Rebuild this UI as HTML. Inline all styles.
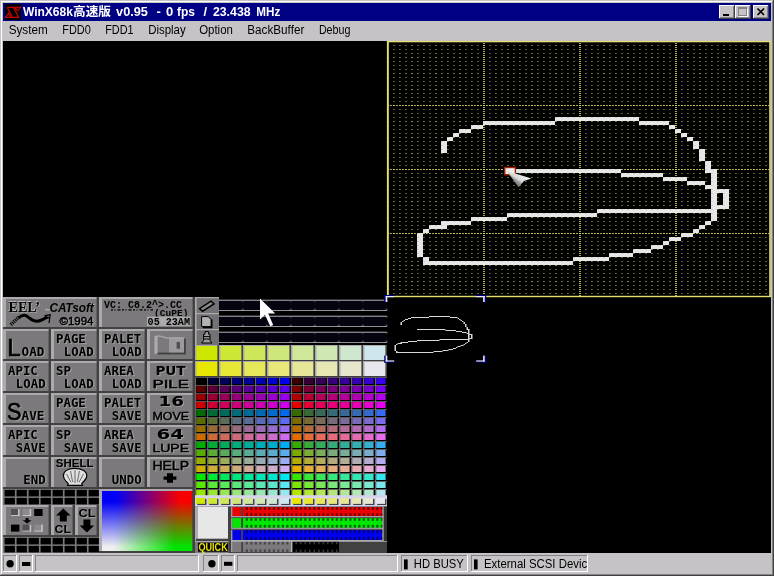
<!DOCTYPE html>
<html><head><meta charset="utf-8"><title>WinX68k</title>
<style>
html,body{margin:0;padding:0;background:#c6c3c6;overflow:hidden}
svg{display:block;will-change:transform}
text{white-space:pre}
.ls{font-family:"Liberation Sans",sans-serif}
.lf{font-family:"Liberation Serif",serif}
.lm{font-family:"Liberation Mono",monospace}
.dm{font-family:"DejaVu Sans Mono","Liberation Mono",monospace}
.ds{font-family:"DejaVu Sans","Liberation Sans",sans-serif}
.cj{font-family:"Liberation Sans","Noto Sans CJK JP",sans-serif}
</style></head>
<body>
<svg width="774" height="576" viewBox="0 0 774 576">
<rect x="0" y="0" width="774" height="576" fill="#c6c3c6"/>
<rect x="1" y="1" width="772" height="1" fill="#ffffff"/>
<rect x="1" y="1" width="1" height="574" fill="#ffffff"/>
<rect x="772" y="1" width="1" height="574" fill="#848284"/>
<rect x="1" y="574" width="772" height="1" fill="#848284"/>
<rect x="773" y="0" width="1" height="576" fill="#424142"/>
<rect x="0" y="575" width="774" height="1" fill="#424142"/>
<rect x="3" y="3" width="768" height="18" fill="#000084"/>
<rect x="5" y="4" width="16" height="16" fill="#000"/>
<g stroke="#c60000" stroke-width="1.2" fill="none" stroke-linejoin="round"><path d="M7.2 7.4H20.6L17.4 10.8L14.9 7.4M7.2 7.4L12.6 17.3M13.4 7.4L18.8 17.3H5.4L8.7 13.1L10.6 17.3"/></g>
<text class="ls" x="22.9" y="16.3" font-size="13" fill="#fff" font-weight="bold" textLength="50" lengthAdjust="spacingAndGlyphs">WinX68k</text>
<text class="cj" x="73" y="16" font-size="12.4" fill="#fff" font-weight="bold" textLength="38" lengthAdjust="spacingAndGlyphs">高速版</text>
<text class="ls" x="116.1" y="16.3" font-size="13" fill="#fff" font-weight="bold" textLength="31.8" lengthAdjust="spacingAndGlyphs">v0.95</text>
<text class="ls" x="158.7" y="16.3" font-size="13" fill="#fff" font-weight="bold" text-anchor="middle">-</text>
<text class="ls" x="169.5" y="16.3" font-size="13" fill="#fff" font-weight="bold" text-anchor="middle">0</text>
<text class="ls" x="176.9" y="16.3" font-size="13" fill="#fff" font-weight="bold" textLength="18" lengthAdjust="spacingAndGlyphs">fps</text>
<text class="ls" x="205.2" y="16.3" font-size="13" fill="#fff" font-weight="bold" text-anchor="middle">/</text>
<text class="ls" x="212.9" y="16.3" font-size="13" fill="#fff" font-weight="bold" textLength="37.7" lengthAdjust="spacingAndGlyphs">23.438</text>
<text class="ls" x="256.3" y="16.3" font-size="13" fill="#fff" font-weight="bold" textLength="24" lengthAdjust="spacingAndGlyphs">MHz</text>
<rect x="719" y="5" width="16" height="14" fill="#c6c3c6"/>
<rect x="719" y="5" width="15" height="1" fill="#ffffff"/>
<rect x="719" y="5" width="1" height="13" fill="#ffffff"/>
<rect x="734" y="5" width="1" height="14" fill="#424142"/>
<rect x="719" y="18" width="16" height="1" fill="#424142"/>
<rect x="733" y="6" width="1" height="12" fill="#848284"/>
<rect x="720" y="17" width="14" height="1" fill="#848284"/>
<rect x="723" y="14" width="6" height="2" fill="#000"/>
<rect x="735" y="5" width="16" height="14" fill="#c6c3c6"/>
<rect x="735" y="5" width="15" height="1" fill="#ffffff"/>
<rect x="735" y="5" width="1" height="13" fill="#ffffff"/>
<rect x="750" y="5" width="1" height="14" fill="#424142"/>
<rect x="735" y="18" width="16" height="1" fill="#424142"/>
<rect x="749" y="6" width="1" height="12" fill="#848284"/>
<rect x="736" y="17" width="14" height="1" fill="#848284"/>
<rect x="738.5" y="7.5" width="8" height="8" fill="none" stroke="#848284" stroke-width="1"/>
<rect x="738" y="7" width="9" height="2" fill="#848284"/>
<rect x="739.5" y="8.5" width="8" height="8" fill="none" stroke="#fff" stroke-width="1" opacity="0"/>
<rect x="739" y="16" width="9" height="1" fill="#ffffff"/>
<rect x="747" y="9" width="1" height="8" fill="#ffffff"/>
<rect x="753" y="5" width="16" height="14" fill="#c6c3c6"/>
<rect x="753" y="5" width="15" height="1" fill="#ffffff"/>
<rect x="753" y="5" width="1" height="13" fill="#ffffff"/>
<rect x="768" y="5" width="1" height="14" fill="#424142"/>
<rect x="753" y="18" width="16" height="1" fill="#424142"/>
<rect x="767" y="6" width="1" height="12" fill="#848284"/>
<rect x="754" y="17" width="14" height="1" fill="#848284"/>
<path d="M757.5 8.5L764 15M764 8.5L757.5 15" stroke="#000" stroke-width="1.7" fill="none"/>
<text class="ls" x="8.7" y="34" font-size="12" fill="#000" textLength="39.1" lengthAdjust="spacingAndGlyphs">System</text>
<text class="ls" x="62.2" y="34" font-size="12" fill="#000" textLength="28.6" lengthAdjust="spacingAndGlyphs">FDD0</text>
<text class="ls" x="105.2" y="34" font-size="12" fill="#000" textLength="28.4" lengthAdjust="spacingAndGlyphs">FDD1</text>
<text class="ls" x="148.2" y="34" font-size="12" fill="#000" textLength="37.5" lengthAdjust="spacingAndGlyphs">Display</text>
<text class="ls" x="199.2" y="34" font-size="12" fill="#000" textLength="33.7" lengthAdjust="spacingAndGlyphs">Option</text>
<text class="ls" x="247.3" y="34" font-size="12" fill="#000" textLength="57" lengthAdjust="spacingAndGlyphs">BackBuffer</text>
<text class="ls" x="318.9" y="34" font-size="12" fill="#000" textLength="31.5" lengthAdjust="spacingAndGlyphs">Debug</text>
<rect x="3" y="41" width="768" height="512" fill="#000"/>
<defs><pattern id="dots" x="387" y="41" width="24" height="16" patternUnits="userSpaceOnUse"><rect x="0.2" y="0" width="1.5" height="1" fill="#c6c363"/><rect x="0.2" y="4" width="1.5" height="1" fill="#94924a"/><rect x="0.2" y="8" width="1.5" height="1" fill="#94924a"/><rect x="0.2" y="12" width="1.5" height="1" fill="#94924a"/><rect x="6.2" y="0" width="1.5" height="1" fill="#94924a"/><rect x="6.2" y="4" width="1.5" height="1" fill="#7b7931"/><rect x="6.2" y="8" width="1.5" height="1" fill="#7b7931"/><rect x="6.2" y="12" width="1.5" height="1" fill="#7b7931"/><rect x="12.2" y="0" width="1.5" height="1" fill="#94924a"/><rect x="12.2" y="4" width="1.5" height="1" fill="#7b7931"/><rect x="12.2" y="8" width="1.5" height="1" fill="#7b7931"/><rect x="12.2" y="12" width="1.5" height="1" fill="#7b7931"/><rect x="18.2" y="0" width="1.5" height="1" fill="#94924a"/><rect x="18.2" y="4" width="1.5" height="1" fill="#7b7931"/><rect x="18.2" y="8" width="1.5" height="1" fill="#7b7931"/><rect x="18.2" y="12" width="1.5" height="1" fill="#7b7931"/></pattern><clipPath id="gclip"><rect x="387" y="41" width="384" height="256"/></clipPath></defs>
<rect x="387" y="41" width="384" height="256" fill="url(#dots)"/>
<line x1="483.95" y1="41" x2="483.95" y2="296" stroke="#e7df6b" stroke-width="1.5" stroke-dasharray="1 1"/>
<line x1="387.2" y1="105.5" x2="769" y2="105.5" stroke="#e7df6b" stroke-width="1" stroke-dasharray="1.5 1.5"/>
<line x1="579.95" y1="41" x2="579.95" y2="296" stroke="#e7df6b" stroke-width="1.5" stroke-dasharray="1 1"/>
<line x1="387.2" y1="169.5" x2="769" y2="169.5" stroke="#e7df6b" stroke-width="1" stroke-dasharray="1.5 1.5"/>
<line x1="675.95" y1="41" x2="675.95" y2="296" stroke="#e7df6b" stroke-width="1.5" stroke-dasharray="1 1"/>
<line x1="387.2" y1="233.5" x2="769" y2="233.5" stroke="#e7df6b" stroke-width="1" stroke-dasharray="1.5 1.5"/>
<rect x="387" y="41" width="383.8" height="1.3" fill="#e7df6b"/>
<rect x="387" y="295.8" width="383.8" height="1.4" fill="#e7df6b"/>
<rect x="386.9" y="41" width="1.9" height="256" fill="#e7df6b"/>
<rect x="769.2" y="41" width="1.7" height="256" fill="#e7df6b"/>
<g fill="#e7e7e7">
<rect x="555" y="117" width="84" height="4"/>
<rect x="483" y="121" width="72" height="4"/>
<rect x="639" y="121" width="30" height="4"/>
<rect x="471" y="125" width="12" height="4"/>
<rect x="669" y="125" width="6" height="4"/>
<rect x="459" y="129" width="12" height="4"/>
<rect x="675" y="129" width="6" height="4"/>
<rect x="453" y="133" width="6" height="4"/>
<rect x="681" y="133" width="6" height="4"/>
<rect x="447" y="137" width="6" height="4"/>
<rect x="687" y="137" width="6" height="4"/>
<rect x="441" y="141" width="6" height="4"/>
<rect x="693" y="141" width="6" height="4"/>
<rect x="441" y="145" width="6" height="4"/>
<rect x="693" y="145" width="6" height="4"/>
<rect x="441" y="149" width="6" height="4"/>
<rect x="699" y="149" width="6" height="4"/>
<rect x="699" y="153" width="6" height="4"/>
<rect x="699" y="157" width="6" height="4"/>
<rect x="705" y="161" width="6" height="4"/>
<rect x="705" y="165" width="6" height="4"/>
<rect x="507" y="169" width="114" height="4"/>
<rect x="705" y="169" width="12" height="4"/>
<rect x="621" y="173" width="42" height="4"/>
<rect x="711" y="173" width="6" height="4"/>
<rect x="663" y="177" width="24" height="4"/>
<rect x="711" y="177" width="6" height="4"/>
<rect x="687" y="181" width="18" height="4"/>
<rect x="711" y="181" width="6" height="4"/>
<rect x="705" y="185" width="12" height="4"/>
<rect x="711" y="189" width="18" height="4"/>
<rect x="711" y="193" width="6" height="4"/>
<rect x="723" y="193" width="6" height="4"/>
<rect x="711" y="197" width="6" height="4"/>
<rect x="723" y="197" width="6" height="4"/>
<rect x="711" y="201" width="6" height="4"/>
<rect x="723" y="201" width="6" height="4"/>
<rect x="711" y="205" width="18" height="4"/>
<rect x="597" y="209" width="120" height="4"/>
<rect x="507" y="213" width="90" height="4"/>
<rect x="711" y="213" width="6" height="4"/>
<rect x="471" y="217" width="36" height="4"/>
<rect x="711" y="217" width="6" height="4"/>
<rect x="441" y="221" width="30" height="4"/>
<rect x="705" y="221" width="6" height="4"/>
<rect x="429" y="225" width="18" height="4"/>
<rect x="699" y="225" width="6" height="4"/>
<rect x="423" y="229" width="6" height="4"/>
<rect x="693" y="229" width="6" height="4"/>
<rect x="417" y="233" width="6" height="4"/>
<rect x="681" y="233" width="12" height="4"/>
<rect x="417" y="237" width="6" height="4"/>
<rect x="669" y="237" width="12" height="4"/>
<rect x="417" y="241" width="6" height="4"/>
<rect x="663" y="241" width="6" height="4"/>
<rect x="417" y="245" width="6" height="4"/>
<rect x="651" y="245" width="12" height="4"/>
<rect x="417" y="249" width="6" height="4"/>
<rect x="633" y="249" width="18" height="4"/>
<rect x="417" y="253" width="6" height="4"/>
<rect x="609" y="253" width="24" height="4"/>
<rect x="423" y="257" width="6" height="4"/>
<rect x="573" y="257" width="36" height="4"/>
<rect x="423" y="261" width="150" height="4"/>
</g>
<g fill="url(#dots)" opacity=".3">
<rect x="555" y="117" width="84" height="4"/>
<rect x="483" y="121" width="72" height="4"/>
<rect x="639" y="121" width="30" height="4"/>
<rect x="471" y="125" width="12" height="4"/>
<rect x="669" y="125" width="6" height="4"/>
<rect x="459" y="129" width="12" height="4"/>
<rect x="675" y="129" width="6" height="4"/>
<rect x="453" y="133" width="6" height="4"/>
<rect x="681" y="133" width="6" height="4"/>
<rect x="447" y="137" width="6" height="4"/>
<rect x="687" y="137" width="6" height="4"/>
<rect x="441" y="141" width="6" height="4"/>
<rect x="693" y="141" width="6" height="4"/>
<rect x="441" y="145" width="6" height="4"/>
<rect x="693" y="145" width="6" height="4"/>
<rect x="441" y="149" width="6" height="4"/>
<rect x="699" y="149" width="6" height="4"/>
<rect x="699" y="153" width="6" height="4"/>
<rect x="699" y="157" width="6" height="4"/>
<rect x="705" y="161" width="6" height="4"/>
<rect x="705" y="165" width="6" height="4"/>
<rect x="507" y="169" width="114" height="4"/>
<rect x="705" y="169" width="12" height="4"/>
<rect x="621" y="173" width="42" height="4"/>
<rect x="711" y="173" width="6" height="4"/>
<rect x="663" y="177" width="24" height="4"/>
<rect x="711" y="177" width="6" height="4"/>
<rect x="687" y="181" width="18" height="4"/>
<rect x="711" y="181" width="6" height="4"/>
<rect x="705" y="185" width="12" height="4"/>
<rect x="711" y="189" width="18" height="4"/>
<rect x="711" y="193" width="6" height="4"/>
<rect x="723" y="193" width="6" height="4"/>
<rect x="711" y="197" width="6" height="4"/>
<rect x="723" y="197" width="6" height="4"/>
<rect x="711" y="201" width="6" height="4"/>
<rect x="723" y="201" width="6" height="4"/>
<rect x="711" y="205" width="18" height="4"/>
<rect x="597" y="209" width="120" height="4"/>
<rect x="507" y="213" width="90" height="4"/>
<rect x="711" y="213" width="6" height="4"/>
<rect x="471" y="217" width="36" height="4"/>
<rect x="711" y="217" width="6" height="4"/>
<rect x="441" y="221" width="30" height="4"/>
<rect x="705" y="221" width="6" height="4"/>
<rect x="429" y="225" width="18" height="4"/>
<rect x="699" y="225" width="6" height="4"/>
<rect x="423" y="229" width="6" height="4"/>
<rect x="693" y="229" width="6" height="4"/>
<rect x="417" y="233" width="6" height="4"/>
<rect x="681" y="233" width="12" height="4"/>
<rect x="417" y="237" width="6" height="4"/>
<rect x="669" y="237" width="12" height="4"/>
<rect x="417" y="241" width="6" height="4"/>
<rect x="663" y="241" width="6" height="4"/>
<rect x="417" y="245" width="6" height="4"/>
<rect x="651" y="245" width="12" height="4"/>
<rect x="417" y="249" width="6" height="4"/>
<rect x="633" y="249" width="18" height="4"/>
<rect x="417" y="253" width="6" height="4"/>
<rect x="609" y="253" width="24" height="4"/>
<rect x="423" y="257" width="6" height="4"/>
<rect x="573" y="257" width="36" height="4"/>
<rect x="423" y="261" width="150" height="4"/>
</g>
<g fill="#d6d7d6">
<rect x="429" y="316" width="21" height="1"/>
<rect x="411" y="317" width="18" height="1"/>
<rect x="450" y="317" width="7.5" height="1"/>
<rect x="408" y="318" width="3" height="1"/>
<rect x="457.5" y="318" width="1.5" height="1"/>
<rect x="405" y="319" width="3" height="1"/>
<rect x="459" y="319" width="1.5" height="1"/>
<rect x="403.5" y="320" width="1.5" height="1"/>
<rect x="460.5" y="320" width="1.5" height="1"/>
<rect x="402" y="321" width="1.5" height="1"/>
<rect x="462" y="321" width="1.5" height="1"/>
<rect x="400.5" y="322" width="1.5" height="1"/>
<rect x="463.5" y="322" width="1.5" height="1"/>
<rect x="400.5" y="323" width="1.5" height="1"/>
<rect x="463.5" y="323" width="1.5" height="1"/>
<rect x="400.5" y="324" width="1.5" height="1"/>
<rect x="465" y="324" width="1.5" height="1"/>
<rect x="465" y="325" width="1.5" height="1"/>
<rect x="465" y="326" width="1.5" height="1"/>
<rect x="466.5" y="327" width="1.5" height="1"/>
<rect x="466.5" y="328" width="1.5" height="1"/>
<rect x="417" y="329" width="28.5" height="1"/>
<rect x="466.5" y="329" width="3" height="1"/>
<rect x="445.5" y="330" width="10.5" height="1"/>
<rect x="468" y="330" width="1.5" height="1"/>
<rect x="456" y="331" width="6" height="1"/>
<rect x="468" y="331" width="1.5" height="1"/>
<rect x="462" y="332" width="4.5" height="1"/>
<rect x="468" y="332" width="1.5" height="1"/>
<rect x="466.5" y="333" width="3" height="1"/>
<rect x="468" y="334" width="4.5" height="1"/>
<rect x="468" y="335" width="1.5" height="1"/>
<rect x="471" y="335" width="1.5" height="1"/>
<rect x="468" y="336" width="1.5" height="1"/>
<rect x="471" y="336" width="1.5" height="1"/>
<rect x="468" y="337" width="1.5" height="1"/>
<rect x="471" y="337" width="1.5" height="1"/>
<rect x="468" y="338" width="4.5" height="1"/>
<rect x="439.5" y="339" width="30" height="1"/>
<rect x="417" y="340" width="22.5" height="1"/>
<rect x="468" y="340" width="1.5" height="1"/>
<rect x="408" y="341" width="9" height="1"/>
<rect x="468" y="341" width="1.5" height="1"/>
<rect x="400.5" y="342" width="7.5" height="1"/>
<rect x="466.5" y="342" width="1.5" height="1"/>
<rect x="397.5" y="343" width="4.5" height="1"/>
<rect x="465" y="343" width="1.5" height="1"/>
<rect x="396" y="344" width="1.5" height="1"/>
<rect x="463.5" y="344" width="1.5" height="1"/>
<rect x="394.5" y="345" width="1.5" height="1"/>
<rect x="460.5" y="345" width="3" height="1"/>
<rect x="394.5" y="346" width="1.5" height="1"/>
<rect x="457.5" y="346" width="3" height="1"/>
<rect x="394.5" y="347" width="1.5" height="1"/>
<rect x="456" y="347" width="1.5" height="1"/>
<rect x="394.5" y="348" width="1.5" height="1"/>
<rect x="453" y="348" width="3" height="1"/>
<rect x="394.5" y="349" width="1.5" height="1"/>
<rect x="448.5" y="349" width="4.5" height="1"/>
<rect x="394.5" y="350" width="1.5" height="1"/>
<rect x="442.5" y="350" width="6" height="1"/>
<rect x="396" y="351" width="1.5" height="1"/>
<rect x="433.5" y="351" width="9" height="1"/>
<rect x="396" y="352" width="37.5" height="1"/>
</g>
<rect x="504.8" y="167.5" width="10.6" height="7.2" fill="#efefef" stroke="#a52000" stroke-width="1.4"/>
<defs><linearGradient id="ag" gradientUnits="userSpaceOnUse" x1="522" y1="174" x2="514" y2="186"><stop offset="0" stop-color="#efefef"/><stop offset=".45" stop-color="#d6d7d6"/><stop offset=".6" stop-color="#9c9a9c"/><stop offset="1" stop-color="#636163"/></linearGradient></defs>
<path d="M506.6 170.8L531.4 178.4L524 181L518.6 187.2Z" fill="url(#ag)"/>
<rect x="3" y="297" width="384" height="256" fill="#7b797b"/>
<rect x="3" y="297" width="96" height="32" fill="#7b797b"/>
<rect x="3" y="297" width="96" height="2" fill="#adaaad"/>
<rect x="3" y="297" width="3" height="32" fill="#adaaad"/>
<rect x="3" y="327" width="96" height="2" fill="#424142"/>
<rect x="96.6" y="297" width="2.4" height="32" fill="#424142"/>
<path d="M3 329l3 -2v2z" fill="#424142"/>
<rect x="99" y="297" width="96" height="32" fill="#7b797b"/>
<rect x="99" y="297" width="96" height="2" fill="#adaaad"/>
<rect x="99" y="297" width="3" height="32" fill="#adaaad"/>
<rect x="99" y="327" width="96" height="2" fill="#424142"/>
<rect x="192.6" y="297" width="2.4" height="32" fill="#424142"/>
<path d="M99 329l3 -2v2z" fill="#424142"/>
<rect x="3" y="329" width="48" height="32" fill="#7b797b"/>
<rect x="3" y="329" width="48" height="2" fill="#adaaad"/>
<rect x="3" y="329" width="3" height="32" fill="#adaaad"/>
<rect x="3" y="359" width="48" height="2" fill="#424142"/>
<rect x="48.6" y="329" width="2.4" height="32" fill="#424142"/>
<path d="M3 361l3 -2v2z" fill="#424142"/>
<rect x="51" y="329" width="48" height="32" fill="#7b797b"/>
<rect x="51" y="329" width="48" height="2" fill="#adaaad"/>
<rect x="51" y="329" width="3" height="32" fill="#adaaad"/>
<rect x="51" y="359" width="48" height="2" fill="#424142"/>
<rect x="96.6" y="329" width="2.4" height="32" fill="#424142"/>
<path d="M51 361l3 -2v2z" fill="#424142"/>
<rect x="99" y="329" width="48" height="32" fill="#7b797b"/>
<rect x="99" y="329" width="48" height="2" fill="#adaaad"/>
<rect x="99" y="329" width="3" height="32" fill="#adaaad"/>
<rect x="99" y="359" width="48" height="2" fill="#424142"/>
<rect x="144.6" y="329" width="2.4" height="32" fill="#424142"/>
<path d="M99 361l3 -2v2z" fill="#424142"/>
<rect x="147" y="329" width="48" height="32" fill="#7b797b"/>
<rect x="147" y="329" width="48" height="2" fill="#adaaad"/>
<rect x="147" y="329" width="3" height="32" fill="#adaaad"/>
<rect x="147" y="359" width="48" height="2" fill="#424142"/>
<rect x="192.6" y="329" width="2.4" height="32" fill="#424142"/>
<path d="M147 361l3 -2v2z" fill="#424142"/>
<rect x="3" y="361" width="48" height="32" fill="#7b797b"/>
<rect x="3" y="361" width="48" height="2" fill="#adaaad"/>
<rect x="3" y="361" width="3" height="32" fill="#adaaad"/>
<rect x="3" y="391" width="48" height="2" fill="#424142"/>
<rect x="48.6" y="361" width="2.4" height="32" fill="#424142"/>
<path d="M3 393l3 -2v2z" fill="#424142"/>
<rect x="51" y="361" width="48" height="32" fill="#7b797b"/>
<rect x="51" y="361" width="48" height="2" fill="#adaaad"/>
<rect x="51" y="361" width="3" height="32" fill="#adaaad"/>
<rect x="51" y="391" width="48" height="2" fill="#424142"/>
<rect x="96.6" y="361" width="2.4" height="32" fill="#424142"/>
<path d="M51 393l3 -2v2z" fill="#424142"/>
<rect x="99" y="361" width="48" height="32" fill="#7b797b"/>
<rect x="99" y="361" width="48" height="2" fill="#adaaad"/>
<rect x="99" y="361" width="3" height="32" fill="#adaaad"/>
<rect x="99" y="391" width="48" height="2" fill="#424142"/>
<rect x="144.6" y="361" width="2.4" height="32" fill="#424142"/>
<path d="M99 393l3 -2v2z" fill="#424142"/>
<rect x="147" y="361" width="48" height="32" fill="#7b797b"/>
<rect x="147" y="361" width="48" height="2" fill="#adaaad"/>
<rect x="147" y="361" width="3" height="32" fill="#adaaad"/>
<rect x="147" y="391" width="48" height="2" fill="#424142"/>
<rect x="192.6" y="361" width="2.4" height="32" fill="#424142"/>
<path d="M147 393l3 -2v2z" fill="#424142"/>
<rect x="3" y="393" width="48" height="32" fill="#7b797b"/>
<rect x="3" y="393" width="48" height="2" fill="#adaaad"/>
<rect x="3" y="393" width="3" height="32" fill="#adaaad"/>
<rect x="3" y="423" width="48" height="2" fill="#424142"/>
<rect x="48.6" y="393" width="2.4" height="32" fill="#424142"/>
<path d="M3 425l3 -2v2z" fill="#424142"/>
<rect x="51" y="393" width="48" height="32" fill="#7b797b"/>
<rect x="51" y="393" width="48" height="2" fill="#adaaad"/>
<rect x="51" y="393" width="3" height="32" fill="#adaaad"/>
<rect x="51" y="423" width="48" height="2" fill="#424142"/>
<rect x="96.6" y="393" width="2.4" height="32" fill="#424142"/>
<path d="M51 425l3 -2v2z" fill="#424142"/>
<rect x="99" y="393" width="48" height="32" fill="#7b797b"/>
<rect x="99" y="393" width="48" height="2" fill="#adaaad"/>
<rect x="99" y="393" width="3" height="32" fill="#adaaad"/>
<rect x="99" y="423" width="48" height="2" fill="#424142"/>
<rect x="144.6" y="393" width="2.4" height="32" fill="#424142"/>
<path d="M99 425l3 -2v2z" fill="#424142"/>
<rect x="147" y="393" width="48" height="32" fill="#7b797b"/>
<rect x="147" y="393" width="48" height="2" fill="#adaaad"/>
<rect x="147" y="393" width="3" height="32" fill="#adaaad"/>
<rect x="147" y="423" width="48" height="2" fill="#424142"/>
<rect x="192.6" y="393" width="2.4" height="32" fill="#424142"/>
<path d="M147 425l3 -2v2z" fill="#424142"/>
<rect x="3" y="425" width="48" height="32" fill="#7b797b"/>
<rect x="3" y="425" width="48" height="2" fill="#adaaad"/>
<rect x="3" y="425" width="3" height="32" fill="#adaaad"/>
<rect x="3" y="455" width="48" height="2" fill="#424142"/>
<rect x="48.6" y="425" width="2.4" height="32" fill="#424142"/>
<path d="M3 457l3 -2v2z" fill="#424142"/>
<rect x="51" y="425" width="48" height="32" fill="#7b797b"/>
<rect x="51" y="425" width="48" height="2" fill="#adaaad"/>
<rect x="51" y="425" width="3" height="32" fill="#adaaad"/>
<rect x="51" y="455" width="48" height="2" fill="#424142"/>
<rect x="96.6" y="425" width="2.4" height="32" fill="#424142"/>
<path d="M51 457l3 -2v2z" fill="#424142"/>
<rect x="99" y="425" width="48" height="32" fill="#7b797b"/>
<rect x="99" y="425" width="48" height="2" fill="#adaaad"/>
<rect x="99" y="425" width="3" height="32" fill="#adaaad"/>
<rect x="99" y="455" width="48" height="2" fill="#424142"/>
<rect x="144.6" y="425" width="2.4" height="32" fill="#424142"/>
<path d="M99 457l3 -2v2z" fill="#424142"/>
<rect x="147" y="425" width="48" height="32" fill="#7b797b"/>
<rect x="147" y="425" width="48" height="2" fill="#adaaad"/>
<rect x="147" y="425" width="3" height="32" fill="#adaaad"/>
<rect x="147" y="455" width="48" height="2" fill="#424142"/>
<rect x="192.6" y="425" width="2.4" height="32" fill="#424142"/>
<path d="M147 457l3 -2v2z" fill="#424142"/>
<rect x="3" y="457" width="48" height="32" fill="#7b797b"/>
<rect x="3" y="457" width="48" height="2" fill="#adaaad"/>
<rect x="3" y="457" width="3" height="32" fill="#adaaad"/>
<rect x="3" y="487" width="48" height="2" fill="#424142"/>
<rect x="48.6" y="457" width="2.4" height="32" fill="#424142"/>
<path d="M3 489l3 -2v2z" fill="#424142"/>
<rect x="51" y="457" width="48" height="32" fill="#7b797b"/>
<rect x="51" y="457" width="48" height="2" fill="#adaaad"/>
<rect x="51" y="457" width="3" height="32" fill="#adaaad"/>
<rect x="51" y="487" width="48" height="2" fill="#424142"/>
<rect x="96.6" y="457" width="2.4" height="32" fill="#424142"/>
<path d="M51 489l3 -2v2z" fill="#424142"/>
<rect x="99" y="457" width="48" height="32" fill="#7b797b"/>
<rect x="99" y="457" width="48" height="2" fill="#adaaad"/>
<rect x="99" y="457" width="3" height="32" fill="#adaaad"/>
<rect x="99" y="487" width="48" height="2" fill="#424142"/>
<rect x="144.6" y="457" width="2.4" height="32" fill="#424142"/>
<path d="M99 489l3 -2v2z" fill="#424142"/>
<rect x="147" y="457" width="48" height="32" fill="#7b797b"/>
<rect x="147" y="457" width="48" height="2" fill="#adaaad"/>
<rect x="147" y="457" width="3" height="32" fill="#adaaad"/>
<rect x="147" y="487" width="48" height="2" fill="#424142"/>
<rect x="192.6" y="457" width="2.4" height="32" fill="#424142"/>
<path d="M147 489l3 -2v2z" fill="#424142"/>
<rect x="3" y="505" width="48" height="32" fill="#7b797b"/>
<rect x="3" y="505" width="48" height="2" fill="#adaaad"/>
<rect x="3" y="505" width="3" height="32" fill="#adaaad"/>
<rect x="3" y="535" width="48" height="2" fill="#424142"/>
<rect x="48.6" y="505" width="2.4" height="32" fill="#424142"/>
<path d="M3 537l3 -2v2z" fill="#424142"/>
<rect x="51" y="505" width="24" height="32" fill="#7b797b"/>
<rect x="51" y="505" width="24" height="2" fill="#adaaad"/>
<rect x="51" y="505" width="3" height="32" fill="#adaaad"/>
<rect x="51" y="535" width="24" height="2" fill="#424142"/>
<rect x="72.6" y="505" width="2.4" height="32" fill="#424142"/>
<path d="M51 537l3 -2v2z" fill="#424142"/>
<rect x="75" y="505" width="24" height="32" fill="#7b797b"/>
<rect x="75" y="505" width="24" height="2" fill="#adaaad"/>
<rect x="75" y="505" width="3" height="32" fill="#adaaad"/>
<rect x="75" y="535" width="24" height="2" fill="#424142"/>
<rect x="96.6" y="505" width="2.4" height="32" fill="#424142"/>
<path d="M75 537l3 -2v2z" fill="#424142"/>
<text class="dm" x="57.3" y="343.5" font-size="11.52" fill="#9c9a9c" font-weight="bold" textLength="29.8" lengthAdjust="spacingAndGlyphs">PAGE</text>
<text class="dm" x="56" y="342.6" font-size="11.52" fill="#000" font-weight="bold" textLength="29.8" lengthAdjust="spacingAndGlyphs">PAGE</text>
<text class="dm" x="65.1" y="356.4" font-size="11.66" fill="#9c9a9c" font-weight="bold" textLength="29.8" lengthAdjust="spacingAndGlyphs">LOAD</text>
<text class="dm" x="63.8" y="355.5" font-size="11.66" fill="#000" font-weight="bold" textLength="29.8" lengthAdjust="spacingAndGlyphs">LOAD</text>
<text class="dm" x="105.3" y="343.5" font-size="11.52" fill="#9c9a9c" font-weight="bold" textLength="37.25" lengthAdjust="spacingAndGlyphs">PALET</text>
<text class="dm" x="104" y="342.6" font-size="11.52" fill="#000" font-weight="bold" textLength="37.25" lengthAdjust="spacingAndGlyphs">PALET</text>
<text class="dm" x="113.1" y="356.4" font-size="11.66" fill="#9c9a9c" font-weight="bold" textLength="29.8" lengthAdjust="spacingAndGlyphs">LOAD</text>
<text class="dm" x="111.8" y="355.5" font-size="11.66" fill="#000" font-weight="bold" textLength="29.8" lengthAdjust="spacingAndGlyphs">LOAD</text>
<text class="dm" x="9.3" y="375.5" font-size="11.52" fill="#9c9a9c" font-weight="bold" textLength="29.8" lengthAdjust="spacingAndGlyphs">APIC</text>
<text class="dm" x="8" y="374.6" font-size="11.52" fill="#000" font-weight="bold" textLength="29.8" lengthAdjust="spacingAndGlyphs">APIC</text>
<text class="dm" x="17.1" y="388.4" font-size="11.66" fill="#9c9a9c" font-weight="bold" textLength="29.8" lengthAdjust="spacingAndGlyphs">LOAD</text>
<text class="dm" x="15.8" y="387.5" font-size="11.66" fill="#000" font-weight="bold" textLength="29.8" lengthAdjust="spacingAndGlyphs">LOAD</text>
<text class="dm" x="57.3" y="375.5" font-size="11.52" fill="#9c9a9c" font-weight="bold" textLength="14.9" lengthAdjust="spacingAndGlyphs">SP</text>
<text class="dm" x="56" y="374.6" font-size="11.52" fill="#000" font-weight="bold" textLength="14.9" lengthAdjust="spacingAndGlyphs">SP</text>
<text class="dm" x="65.1" y="388.4" font-size="11.66" fill="#9c9a9c" font-weight="bold" textLength="29.8" lengthAdjust="spacingAndGlyphs">LOAD</text>
<text class="dm" x="63.8" y="387.5" font-size="11.66" fill="#000" font-weight="bold" textLength="29.8" lengthAdjust="spacingAndGlyphs">LOAD</text>
<text class="dm" x="105.3" y="375.5" font-size="11.52" fill="#9c9a9c" font-weight="bold" textLength="29.8" lengthAdjust="spacingAndGlyphs">AREA</text>
<text class="dm" x="104" y="374.6" font-size="11.52" fill="#000" font-weight="bold" textLength="29.8" lengthAdjust="spacingAndGlyphs">AREA</text>
<text class="dm" x="113.1" y="388.4" font-size="11.66" fill="#9c9a9c" font-weight="bold" textLength="29.8" lengthAdjust="spacingAndGlyphs">LOAD</text>
<text class="dm" x="111.8" y="387.5" font-size="11.66" fill="#000" font-weight="bold" textLength="29.8" lengthAdjust="spacingAndGlyphs">LOAD</text>
<text class="dm" x="57.3" y="407.5" font-size="11.52" fill="#9c9a9c" font-weight="bold" textLength="29.8" lengthAdjust="spacingAndGlyphs">PAGE</text>
<text class="dm" x="56" y="406.6" font-size="11.52" fill="#000" font-weight="bold" textLength="29.8" lengthAdjust="spacingAndGlyphs">PAGE</text>
<text class="dm" x="65.1" y="420.4" font-size="11.66" fill="#9c9a9c" font-weight="bold" textLength="29.8" lengthAdjust="spacingAndGlyphs">SAVE</text>
<text class="dm" x="63.8" y="419.5" font-size="11.66" fill="#000" font-weight="bold" textLength="29.8" lengthAdjust="spacingAndGlyphs">SAVE</text>
<text class="dm" x="105.3" y="407.5" font-size="11.52" fill="#9c9a9c" font-weight="bold" textLength="37.25" lengthAdjust="spacingAndGlyphs">PALET</text>
<text class="dm" x="104" y="406.6" font-size="11.52" fill="#000" font-weight="bold" textLength="37.25" lengthAdjust="spacingAndGlyphs">PALET</text>
<text class="dm" x="113.1" y="420.4" font-size="11.66" fill="#9c9a9c" font-weight="bold" textLength="29.8" lengthAdjust="spacingAndGlyphs">SAVE</text>
<text class="dm" x="111.8" y="419.5" font-size="11.66" fill="#000" font-weight="bold" textLength="29.8" lengthAdjust="spacingAndGlyphs">SAVE</text>
<text class="dm" x="9.3" y="439.5" font-size="11.52" fill="#9c9a9c" font-weight="bold" textLength="29.8" lengthAdjust="spacingAndGlyphs">APIC</text>
<text class="dm" x="8" y="438.6" font-size="11.52" fill="#000" font-weight="bold" textLength="29.8" lengthAdjust="spacingAndGlyphs">APIC</text>
<text class="dm" x="17.1" y="452.4" font-size="11.66" fill="#9c9a9c" font-weight="bold" textLength="29.8" lengthAdjust="spacingAndGlyphs">SAVE</text>
<text class="dm" x="15.8" y="451.5" font-size="11.66" fill="#000" font-weight="bold" textLength="29.8" lengthAdjust="spacingAndGlyphs">SAVE</text>
<text class="dm" x="57.3" y="439.5" font-size="11.52" fill="#9c9a9c" font-weight="bold" textLength="14.9" lengthAdjust="spacingAndGlyphs">SP</text>
<text class="dm" x="56" y="438.6" font-size="11.52" fill="#000" font-weight="bold" textLength="14.9" lengthAdjust="spacingAndGlyphs">SP</text>
<text class="dm" x="65.1" y="452.4" font-size="11.66" fill="#9c9a9c" font-weight="bold" textLength="29.8" lengthAdjust="spacingAndGlyphs">SAVE</text>
<text class="dm" x="63.8" y="451.5" font-size="11.66" fill="#000" font-weight="bold" textLength="29.8" lengthAdjust="spacingAndGlyphs">SAVE</text>
<text class="dm" x="105.3" y="439.5" font-size="11.52" fill="#9c9a9c" font-weight="bold" textLength="29.8" lengthAdjust="spacingAndGlyphs">AREA</text>
<text class="dm" x="104" y="438.6" font-size="11.52" fill="#000" font-weight="bold" textLength="29.8" lengthAdjust="spacingAndGlyphs">AREA</text>
<text class="dm" x="113.1" y="452.4" font-size="11.66" fill="#9c9a9c" font-weight="bold" textLength="29.8" lengthAdjust="spacingAndGlyphs">SAVE</text>
<text class="dm" x="111.8" y="451.5" font-size="11.66" fill="#000" font-weight="bold" textLength="29.8" lengthAdjust="spacingAndGlyphs">SAVE</text>
<text class="dm" x="24.55" y="484.4" font-size="11.66" fill="#9c9a9c" font-weight="bold" textLength="22.35" lengthAdjust="spacingAndGlyphs">END</text>
<text class="dm" x="23.25" y="483.5" font-size="11.66" fill="#000" font-weight="bold" textLength="22.35" lengthAdjust="spacingAndGlyphs">END</text>
<text class="dm" x="113.1" y="484.4" font-size="11.66" fill="#9c9a9c" font-weight="bold" textLength="29.8" lengthAdjust="spacingAndGlyphs">UNDO</text>
<text class="dm" x="111.8" y="483.5" font-size="11.66" fill="#000" font-weight="bold" textLength="29.8" lengthAdjust="spacingAndGlyphs">UNDO</text>
<text class="ls" x="8.5" y="356.9" font-size="24.02" fill="#9c9a9c" textLength="13.4" lengthAdjust="spacingAndGlyphs" stroke="#9c9a9c" stroke-width=".7">L</text>
<text class="ls" x="7.2" y="356" font-size="24.02" fill="#000" textLength="13.4" lengthAdjust="spacingAndGlyphs" stroke="#000" stroke-width=".7">L</text>
<text class="dm" x="22.9" y="356.6" font-size="11.93" fill="#9c9a9c" font-weight="bold" textLength="22.8" lengthAdjust="spacingAndGlyphs">OAD</text>
<text class="dm" x="21.6" y="355.7" font-size="11.93" fill="#000" font-weight="bold" textLength="22.8" lengthAdjust="spacingAndGlyphs">OAD</text>
<text class="ls" x="8.3" y="420.5" font-size="23.18" fill="#9c9a9c" textLength="14.4" lengthAdjust="spacingAndGlyphs" stroke="#9c9a9c" stroke-width=".7">S</text>
<text class="ls" x="7" y="419.6" font-size="23.18" fill="#000" textLength="14.4" lengthAdjust="spacingAndGlyphs" stroke="#000" stroke-width=".7">S</text>
<text class="dm" x="22.9" y="420.6" font-size="11.93" fill="#9c9a9c" font-weight="bold" textLength="22.8" lengthAdjust="spacingAndGlyphs">AVE</text>
<text class="dm" x="21.6" y="419.7" font-size="11.93" fill="#000" font-weight="bold" textLength="22.8" lengthAdjust="spacingAndGlyphs">AVE</text>
<text class="ds" x="156.7" y="376.1" font-size="12.21" fill="#9c9a9c" font-weight="bold" textLength="30.2" lengthAdjust="spacingAndGlyphs">PUT</text>
<text class="ds" x="155.4" y="375.2" font-size="12.21" fill="#000" font-weight="bold" textLength="30.2" lengthAdjust="spacingAndGlyphs">PUT</text>
<text class="ls" x="153.7" y="388.9" font-size="11.17" fill="#9c9a9c" textLength="36.6" lengthAdjust="spacingAndGlyphs" stroke="#9c9a9c" stroke-width=".45">PILE</text>
<text class="ls" x="152.4" y="388" font-size="11.17" fill="#000" textLength="36.6" lengthAdjust="spacingAndGlyphs" stroke="#000" stroke-width=".45">PILE</text>
<text class="ds" x="159.9" y="406.9" font-size="13.17" fill="#9c9a9c" font-weight="bold" textLength="25.4" lengthAdjust="spacingAndGlyphs">16</text>
<text class="ds" x="158.6" y="406" font-size="13.17" fill="#000" font-weight="bold" textLength="25.4" lengthAdjust="spacingAndGlyphs">16</text>
<text class="ls" x="153.7" y="420.9" font-size="11.17" fill="#9c9a9c" textLength="36.6" lengthAdjust="spacingAndGlyphs" stroke="#9c9a9c" stroke-width=".45">MOVE</text>
<text class="ls" x="152.4" y="420" font-size="11.17" fill="#000" textLength="36.6" lengthAdjust="spacingAndGlyphs" stroke="#000" stroke-width=".45">MOVE</text>
<text class="ds" x="157.9" y="439.5" font-size="13.17" fill="#9c9a9c" font-weight="bold" textLength="27.4" lengthAdjust="spacingAndGlyphs">64</text>
<text class="ds" x="156.6" y="438.6" font-size="13.17" fill="#000" font-weight="bold" textLength="27.4" lengthAdjust="spacingAndGlyphs">64</text>
<text class="ls" x="153.7" y="452.9" font-size="11.17" fill="#9c9a9c" textLength="36.6" lengthAdjust="spacingAndGlyphs" stroke="#9c9a9c" stroke-width=".45">LUPE</text>
<text class="ls" x="152.4" y="452" font-size="11.17" fill="#000" textLength="36.6" lengthAdjust="spacingAndGlyphs" stroke="#000" stroke-width=".45">LUPE</text>
<text class="ls" x="153.7" y="470.6" font-size="12.15" fill="#9c9a9c" textLength="36.6" lengthAdjust="spacingAndGlyphs" stroke="#9c9a9c" stroke-width=".45">HELP</text>
<text class="ls" x="152.4" y="469.7" font-size="12.15" fill="#000" textLength="36.6" lengthAdjust="spacingAndGlyphs" stroke="#000" stroke-width=".45">HELP</text>
<path d="M167 473.3h6v3.2h3.4v3.2h-3.4v3.1h-6v-3.1h-3.4v-3.2h3.4z" fill="#000"/>
<text class="ls" x="57.1" y="468.1" font-size="10.06" fill="#9c9a9c" font-weight="bold" textLength="37.6" lengthAdjust="spacingAndGlyphs">SHELL</text>
<text class="ls" x="55.8" y="467.2" font-size="10.06" fill="#000" font-weight="bold" textLength="37.6" lengthAdjust="spacingAndGlyphs">SHELL</text>
<g><path d="M63.4 476c0-5 5-7.6 11.4-7.6s12 2.6 12 7.6c0 3.6-3.6 5.6-5 7.6l.6 1.8h-14.8l.6-1.8c-1.4-2-4.8-4-4.8-7.600z" fill="#dedfde" stroke="#000" stroke-width="1.2"/><path d="M75 470v13M70.600 471l2 11M79.400 471l-2 11M66.600 474l4.400 8.400M83.400 474l-4.400 8.400" stroke="#6b696b" stroke-width="1" fill="none"/></g>
<g><path d="M156 336l10 1.600l18.600 .4v15.800h-28.600z" fill="#7b797b"/><rect x="169" y="338" width="15" height="15.400" fill="#9c9a9c"/><rect x="154.400" y="335.800" width="3.200" height="18" fill="#adaaad"/><path d="M156 335.600h4l6.400 1.600h18v1.200h-18.400l-6-1.600h-4z" fill="#adaaad"/><rect x="176.600" y="342" width="3.400" height="6.800" fill="#525052"/><rect x="157.600" y="352.600" width="28" height="1.800" fill="#424142"/><rect x="184" y="338.600" width="1.800" height="15.600" fill="#424142"/></g>
<text class="lf" x="7.9" y="311.1" font-size="15.27" fill="#bdbabd" font-weight="bold" textLength="31.4" lengthAdjust="spacingAndGlyphs">EEL’</text>
<text class="lf" x="9.9" y="312.5" font-size="15.27" fill="#9c9a9c" font-weight="bold" textLength="31.4" lengthAdjust="spacingAndGlyphs">EEL’</text>
<text class="lf" x="8.6" y="311.6" font-size="15.27" fill="#000" font-weight="bold" textLength="31.4" lengthAdjust="spacingAndGlyphs">EEL’</text>
<path d="M45 309.800h7M88.600 304.400h6" stroke="#bdbabd" stroke-width="1" fill="none"/>
<text class="ls" x="49.4" y="311.6" font-size="13.4" fill="#000" font-weight="bold" textLength="44.4" lengthAdjust="spacingAndGlyphs" font-style="italic">CATsoft</text>
<text class="ls" x="60.9" y="326.1" font-size="11.45" fill="#9c9a9c" textLength="33.8" lengthAdjust="spacingAndGlyphs" stroke="#9c9a9c" stroke-width=".45">©1994</text>
<text class="ls" x="59.6" y="325.2" font-size="11.45" fill="#000" textLength="33.8" lengthAdjust="spacingAndGlyphs" stroke="#000" stroke-width=".45">©1994</text>
<path d="M18.600 317.800c3-2.600 6-3.200 8.400-1.600c3 2 5 5 10 5c4 0 7-2 10.400-4.400" stroke="#000" stroke-width="3" fill="none"/><path d="M10.800 324.600l8-7.400" stroke="#000" stroke-width="3.600" stroke-dasharray="1.100 .9" fill="none"/><path d="M44.600 315.600l5.600-.8l-1.200 8.400M43 319l7-1.600" stroke="#000" stroke-width="1.200" fill="none"/>
<text class="lm" x="104" y="308" font-size="10" fill="#000" font-weight="bold" textLength="78" lengthAdjust="spacingAndGlyphs">VC: C8.2^>.CC</text>
<text class="lm" x="154" y="315.8" font-size="9.5" fill="#000" font-weight="bold" textLength="34.5" lengthAdjust="spacingAndGlyphs">(CuPE)</text>
<path d="M111 309.800H153" stroke="#000" stroke-width="1.200" stroke-dasharray="2 1.500 1 2 3 1.500" fill="none"/>
<rect x="147" y="316.6" width="43.6" height="9.6" fill="#adaaad"/>
<text class="lm" x="148.9" y="325.9" font-size="10" fill="#9c9a9c" font-weight="bold" textLength="42.4" lengthAdjust="spacingAndGlyphs">05 23AM</text>
<text class="lm" x="147.6" y="325" font-size="10" fill="#000" font-weight="bold" textLength="42.4" lengthAdjust="spacingAndGlyphs">05 23AM</text>
<rect x="3" y="489" width="192" height="16" fill="#7b797b"/>
<rect x="4.6" y="489.9" width="10.3" height="6.5" fill="#000"/>
<rect x="16.6" y="489.9" width="10.3" height="6.5" fill="#000"/>
<rect x="28.6" y="489.9" width="10.3" height="6.5" fill="#000"/>
<rect x="40.6" y="489.9" width="10.3" height="6.5" fill="#000"/>
<rect x="52.6" y="489.9" width="10.3" height="6.5" fill="#000"/>
<rect x="64.6" y="489.9" width="10.3" height="6.5" fill="#000"/>
<rect x="76.6" y="489.9" width="10.3" height="6.5" fill="#000"/>
<rect x="88.6" y="489.9" width="10.3" height="6.5" fill="#000"/>
<rect x="100.6" y="489.9" width="10.3" height="6.5" fill="#000"/>
<rect x="112.6" y="489.9" width="10.3" height="6.5" fill="#000"/>
<rect x="124.6" y="489.9" width="10.3" height="6.5" fill="#000"/>
<rect x="136.6" y="489.9" width="10.3" height="6.5" fill="#000"/>
<rect x="148.6" y="489.9" width="10.3" height="6.5" fill="#000"/>
<rect x="160.6" y="489.9" width="10.3" height="6.5" fill="#000"/>
<rect x="172.6" y="489.9" width="10.3" height="6.5" fill="#000"/>
<rect x="184.6" y="489.9" width="10.3" height="6.5" fill="#000"/>
<rect x="4.6" y="497.9" width="10.3" height="6.5" fill="#000"/>
<rect x="16.6" y="497.9" width="10.3" height="6.5" fill="#000"/>
<rect x="28.6" y="497.9" width="10.3" height="6.5" fill="#000"/>
<rect x="40.6" y="497.9" width="10.3" height="6.5" fill="#000"/>
<rect x="52.6" y="497.9" width="10.3" height="6.5" fill="#000"/>
<rect x="64.6" y="497.9" width="10.3" height="6.5" fill="#000"/>
<rect x="76.6" y="497.9" width="10.3" height="6.5" fill="#000"/>
<rect x="88.6" y="497.9" width="10.3" height="6.5" fill="#000"/>
<rect x="100.6" y="497.9" width="10.3" height="6.5" fill="#000"/>
<rect x="112.6" y="497.9" width="10.3" height="6.5" fill="#000"/>
<rect x="124.6" y="497.9" width="10.3" height="6.5" fill="#000"/>
<rect x="136.6" y="497.9" width="10.3" height="6.5" fill="#000"/>
<rect x="148.6" y="497.9" width="10.3" height="6.5" fill="#000"/>
<rect x="160.6" y="497.9" width="10.3" height="6.5" fill="#000"/>
<rect x="172.6" y="497.9" width="10.3" height="6.5" fill="#000"/>
<rect x="184.6" y="497.9" width="10.3" height="6.5" fill="#000"/>
<rect x="3" y="537" width="192" height="16" fill="#7b797b"/>
<rect x="4.6" y="537.9" width="10.3" height="6.5" fill="#000"/>
<rect x="16.6" y="537.9" width="10.3" height="6.5" fill="#000"/>
<rect x="28.6" y="537.9" width="10.3" height="6.5" fill="#000"/>
<rect x="40.6" y="537.9" width="10.3" height="6.5" fill="#000"/>
<rect x="52.6" y="537.9" width="10.3" height="6.5" fill="#000"/>
<rect x="64.6" y="537.9" width="10.3" height="6.5" fill="#000"/>
<rect x="76.6" y="537.9" width="10.3" height="6.5" fill="#000"/>
<rect x="88.6" y="537.9" width="10.3" height="6.5" fill="#000"/>
<rect x="100.6" y="537.9" width="10.3" height="6.5" fill="#000"/>
<rect x="112.6" y="537.9" width="10.3" height="6.5" fill="#000"/>
<rect x="124.6" y="537.9" width="10.3" height="6.5" fill="#000"/>
<rect x="136.6" y="537.9" width="10.3" height="6.5" fill="#000"/>
<rect x="148.6" y="537.9" width="10.3" height="6.5" fill="#000"/>
<rect x="160.6" y="537.9" width="10.3" height="6.5" fill="#000"/>
<rect x="172.6" y="537.9" width="10.3" height="6.5" fill="#000"/>
<rect x="184.6" y="537.9" width="10.3" height="6.5" fill="#000"/>
<rect x="4.6" y="545.9" width="10.3" height="6.5" fill="#000"/>
<rect x="16.6" y="545.9" width="10.3" height="6.5" fill="#000"/>
<rect x="28.6" y="545.9" width="10.3" height="6.5" fill="#000"/>
<rect x="40.6" y="545.9" width="10.3" height="6.5" fill="#000"/>
<rect x="52.6" y="545.9" width="10.3" height="6.5" fill="#000"/>
<rect x="64.6" y="545.9" width="10.3" height="6.5" fill="#000"/>
<rect x="76.6" y="545.9" width="10.3" height="6.5" fill="#000"/>
<rect x="88.6" y="545.9" width="10.3" height="6.5" fill="#000"/>
<rect x="100.6" y="545.9" width="10.3" height="6.5" fill="#000"/>
<rect x="112.6" y="545.9" width="10.3" height="6.5" fill="#000"/>
<rect x="124.6" y="545.9" width="10.3" height="6.5" fill="#000"/>
<rect x="136.6" y="545.9" width="10.3" height="6.5" fill="#000"/>
<rect x="148.6" y="545.9" width="10.3" height="6.5" fill="#000"/>
<rect x="160.6" y="545.9" width="10.3" height="6.5" fill="#000"/>
<rect x="172.6" y="545.9" width="10.3" height="6.5" fill="#000"/>
<rect x="184.6" y="545.9" width="10.3" height="6.5" fill="#000"/>
<rect x="11" y="509" width="8.4" height="7" fill="#525052"/>
<rect x="18" y="509" width="1.6" height="7" fill="#c6c3c6"/>
<rect x="11" y="515" width="8.6" height="1" fill="#c6c3c6"/>
<rect x="22.6" y="509" width="8.4" height="7" fill="#8c8a8c"/>
<rect x="29.6" y="509" width="1.6" height="7" fill="#c6c3c6"/>
<rect x="22.6" y="515" width="8.6" height="1" fill="#c6c3c6"/>
<rect x="34.2" y="509" width="8.4" height="7" fill="#000"/>
<rect x="11" y="524.6" width="8.4" height="7" fill="#000"/>
<rect x="22.6" y="524.6" width="8.4" height="7" fill="#525052"/>
<rect x="29.6" y="524.6" width="1.6" height="7" fill="#c6c3c6"/>
<rect x="22.6" y="530.6" width="8.6" height="1" fill="#c6c3c6"/>
<rect x="34.2" y="524.6" width="8.4" height="7" fill="#8c8a8c"/>
<rect x="41.2" y="524.6" width="1.6" height="7" fill="#c6c3c6"/>
<rect x="34.2" y="530.6" width="8.6" height="1" fill="#c6c3c6"/>
<path d="M25.600 518h3v2.200h3l-4.500 3.400l-4.500-3.400h3z" fill="#000"/>
<path d="M63.300 508.400l7.300 7h-3.800v6h-7v-6h-3.800z" fill="#000"/>
<text class="ls" x="55.9" y="533.9" font-size="10.89" fill="#9c9a9c" font-weight="bold" textLength="16.4" lengthAdjust="spacingAndGlyphs">CL</text>
<text class="ls" x="54.6" y="533" font-size="10.89" fill="#000" font-weight="bold" textLength="16.4" lengthAdjust="spacingAndGlyphs">CL</text>
<text class="ls" x="79.7" y="517.5" font-size="10.89" fill="#9c9a9c" font-weight="bold" textLength="17.2" lengthAdjust="spacingAndGlyphs">CL</text>
<text class="ls" x="78.4" y="516.6" font-size="10.89" fill="#000" font-weight="bold" textLength="17.2" lengthAdjust="spacingAndGlyphs">CL</text>
<path d="M86.900 532.400l7.300-7h-3.800v-6h-7v6h-3.800z" fill="#000"/>
<defs><linearGradient id="gt" gradientUnits="userSpaceOnUse" x1="102" x2="192.4" y1="0" y2="0"><stop offset="0" stop-color="#0000f7"/><stop offset=".15" stop-color="#0000f7"/><stop offset=".86" stop-color="#f70000"/><stop offset="1" stop-color="#f70000"/></linearGradient><linearGradient id="gb" gradientUnits="userSpaceOnUse" x1="102" x2="192.4" y1="0" y2="0"><stop offset="0" stop-color="#efefef"/><stop offset=".13" stop-color="#efefef"/><stop offset=".8" stop-color="#00e300"/><stop offset="1" stop-color="#00e300"/></linearGradient><linearGradient id="gm" gradientUnits="userSpaceOnUse" x1="0" x2="0" y1="491" y2="551"><stop offset="0" stop-color="#000"/><stop offset=".18" stop-color="#000"/><stop offset=".93" stop-color="#fff"/><stop offset="1" stop-color="#fff"/></linearGradient><mask id="mk" maskUnits="userSpaceOnUse" x="100" y="490" width="96" height="64"><rect x="100" y="490" width="96" height="64" fill="url(#gm)"/></mask></defs>
<rect x="99" y="489" width="96" height="64" fill="#7b797b"/>
<rect x="99" y="489" width="96" height="2" fill="#adaaad"/>
<rect x="99" y="489" width="3" height="64" fill="#adaaad"/>
<rect x="102" y="491" width="92" height="61" fill="url(#gt)"/>
<rect x="102" y="491" width="92" height="61" fill="url(#gb)" mask="url(#mk)"/>
<rect x="192.4" y="489" width="2.6" height="64" fill="#424142"/>
<rect x="99" y="551" width="96" height="2" fill="#424142"/>
<rect x="195" y="297" width="24" height="16" fill="#737173"/>
<rect x="195" y="297" width="24" height="1.2" fill="#adaaad"/>
<rect x="195" y="297" width="1.6" height="16" fill="#adaaad"/>
<rect x="219" y="297" width="168" height="16" fill="#000"/>
<rect x="219" y="300.5" width="168" height="9.6" fill="#040410"/>
<rect x="219" y="299.7" width="168" height="1.1" fill="#a5a2a5"/>
<rect x="219" y="310" width="168" height="1" fill="#949294"/>
<rect x="241.8" y="300.4" width="2" height="1" fill="#6b696b"/>
<rect x="241.8" y="308.8" width="2" height="1" fill="#6b696b"/>
<rect x="265.8" y="300.4" width="2" height="1" fill="#6b696b"/>
<rect x="265.8" y="308.8" width="2" height="1" fill="#6b696b"/>
<rect x="289.8" y="300.4" width="2" height="1" fill="#6b696b"/>
<rect x="289.8" y="308.8" width="2" height="1" fill="#6b696b"/>
<rect x="313.8" y="300.4" width="2" height="1" fill="#6b696b"/>
<rect x="313.8" y="308.8" width="2" height="1" fill="#6b696b"/>
<rect x="337.8" y="300.4" width="2" height="1" fill="#6b696b"/>
<rect x="337.8" y="308.8" width="2" height="1" fill="#6b696b"/>
<rect x="361.8" y="300.4" width="2" height="1" fill="#6b696b"/>
<rect x="361.8" y="308.8" width="2" height="1" fill="#6b696b"/>
<rect x="385.8" y="300.4" width="2" height="1" fill="#6b696b"/>
<rect x="385.8" y="308.8" width="2" height="1" fill="#6b696b"/>
<rect x="195" y="313" width="24" height="16" fill="#737173"/>
<rect x="195" y="313" width="24" height="1.2" fill="#adaaad"/>
<rect x="195" y="313" width="1.6" height="16" fill="#adaaad"/>
<rect x="219" y="313" width="168" height="16" fill="#000"/>
<rect x="219" y="316.5" width="168" height="9.6" fill="#040410"/>
<rect x="219" y="315.7" width="168" height="1.1" fill="#a5a2a5"/>
<rect x="219" y="326" width="168" height="1" fill="#949294"/>
<rect x="241.8" y="316.4" width="2" height="1" fill="#6b696b"/>
<rect x="241.8" y="324.8" width="2" height="1" fill="#6b696b"/>
<rect x="265.8" y="316.4" width="2" height="1" fill="#6b696b"/>
<rect x="265.8" y="324.8" width="2" height="1" fill="#6b696b"/>
<rect x="289.8" y="316.4" width="2" height="1" fill="#6b696b"/>
<rect x="289.8" y="324.8" width="2" height="1" fill="#6b696b"/>
<rect x="313.8" y="316.4" width="2" height="1" fill="#6b696b"/>
<rect x="313.8" y="324.8" width="2" height="1" fill="#6b696b"/>
<rect x="337.8" y="316.4" width="2" height="1" fill="#6b696b"/>
<rect x="337.8" y="324.8" width="2" height="1" fill="#6b696b"/>
<rect x="361.8" y="316.4" width="2" height="1" fill="#6b696b"/>
<rect x="361.8" y="324.8" width="2" height="1" fill="#6b696b"/>
<rect x="385.8" y="316.4" width="2" height="1" fill="#6b696b"/>
<rect x="385.8" y="324.8" width="2" height="1" fill="#6b696b"/>
<rect x="195" y="329" width="24" height="16" fill="#737173"/>
<rect x="195" y="329" width="24" height="1.2" fill="#adaaad"/>
<rect x="195" y="329" width="1.6" height="16" fill="#adaaad"/>
<rect x="219" y="329" width="168" height="16" fill="#000"/>
<rect x="219" y="332.5" width="168" height="9.6" fill="#040410"/>
<rect x="219" y="331.7" width="168" height="1.1" fill="#a5a2a5"/>
<rect x="219" y="342" width="168" height="1" fill="#949294"/>
<rect x="241.8" y="332.4" width="2" height="1" fill="#6b696b"/>
<rect x="241.8" y="340.8" width="2" height="1" fill="#6b696b"/>
<rect x="265.8" y="332.4" width="2" height="1" fill="#6b696b"/>
<rect x="265.8" y="340.8" width="2" height="1" fill="#6b696b"/>
<rect x="289.8" y="332.4" width="2" height="1" fill="#6b696b"/>
<rect x="289.8" y="340.8" width="2" height="1" fill="#6b696b"/>
<rect x="313.8" y="332.4" width="2" height="1" fill="#6b696b"/>
<rect x="313.8" y="340.8" width="2" height="1" fill="#6b696b"/>
<rect x="337.8" y="332.4" width="2" height="1" fill="#6b696b"/>
<rect x="337.8" y="340.8" width="2" height="1" fill="#6b696b"/>
<rect x="361.8" y="332.4" width="2" height="1" fill="#6b696b"/>
<rect x="361.8" y="340.8" width="2" height="1" fill="#6b696b"/>
<rect x="385.8" y="332.4" width="2" height="1" fill="#6b696b"/>
<rect x="385.8" y="340.8" width="2" height="1" fill="#6b696b"/>
<path d="M199.600 308.600l11.400-7.400l3 2.600l-11.400 7.400z" fill="#8c8a8c" stroke="#000" stroke-width="1.5"/>
<path d="M201.600 316.600h6.500l3 2.500v7.500h-9.500z" fill="#b5b2b5" stroke="#000" stroke-width="1"/><path d="M211.800 319.500v8h-9" stroke="#000" stroke-width="1.400" fill="none"/>
<path d="M205 331.600h3.600v2.600h1.400v6.200l2 2.600h-10.400l2-2.600v-6.200h1.400z" fill="#9c9a9c" stroke="#000" stroke-width="1"/><path d="M203.600 336.600h6.400M203.600 339h6.400" stroke="#000" stroke-width="1"/>
<rect x="195" y="345" width="24" height="16" fill="#cee700"/>
<rect x="195" y="345" width="24" height="1" fill="#adaaad"/>
<rect x="195" y="345" width="1.5" height="16" fill="#adaaad"/>
<rect x="217.4" y="345" width="1.6" height="16" fill="#424142"/>
<rect x="195" y="360" width="24" height="1" fill="#424142"/>
<rect x="219" y="345" width="24" height="16" fill="#cee736"/>
<rect x="219" y="345" width="24" height="1" fill="#adaaad"/>
<rect x="219" y="345" width="1.5" height="16" fill="#adaaad"/>
<rect x="241.4" y="345" width="1.6" height="16" fill="#424142"/>
<rect x="219" y="360" width="24" height="1" fill="#424142"/>
<rect x="243" y="345" width="24" height="16" fill="#cee75a"/>
<rect x="243" y="345" width="24" height="1" fill="#adaaad"/>
<rect x="243" y="345" width="1.5" height="16" fill="#adaaad"/>
<rect x="265.4" y="345" width="1.6" height="16" fill="#424142"/>
<rect x="243" y="360" width="24" height="1" fill="#424142"/>
<rect x="267" y="345" width="24" height="16" fill="#cee77a"/>
<rect x="267" y="345" width="24" height="1" fill="#adaaad"/>
<rect x="267" y="345" width="1.5" height="16" fill="#adaaad"/>
<rect x="289.4" y="345" width="1.6" height="16" fill="#424142"/>
<rect x="267" y="360" width="24" height="1" fill="#424142"/>
<rect x="291" y="345" width="24" height="16" fill="#cee798"/>
<rect x="291" y="345" width="24" height="1" fill="#adaaad"/>
<rect x="291" y="345" width="1.5" height="16" fill="#adaaad"/>
<rect x="313.4" y="345" width="1.6" height="16" fill="#424142"/>
<rect x="291" y="360" width="24" height="1" fill="#424142"/>
<rect x="315" y="345" width="24" height="16" fill="#cee7b3"/>
<rect x="315" y="345" width="24" height="1" fill="#adaaad"/>
<rect x="315" y="345" width="1.5" height="16" fill="#adaaad"/>
<rect x="337.4" y="345" width="1.6" height="16" fill="#424142"/>
<rect x="315" y="360" width="24" height="1" fill="#424142"/>
<rect x="339" y="345" width="24" height="16" fill="#cee7ce"/>
<rect x="339" y="345" width="24" height="1" fill="#adaaad"/>
<rect x="339" y="345" width="1.5" height="16" fill="#adaaad"/>
<rect x="361.4" y="345" width="1.6" height="16" fill="#424142"/>
<rect x="339" y="360" width="24" height="1" fill="#424142"/>
<rect x="363" y="345" width="24" height="16" fill="#cee7ef"/>
<rect x="363" y="345" width="24" height="1" fill="#adaaad"/>
<rect x="363" y="345" width="1.5" height="16" fill="#adaaad"/>
<rect x="385.4" y="345" width="1.6" height="16" fill="#424142"/>
<rect x="363" y="360" width="24" height="1" fill="#424142"/>
<rect x="195" y="361" width="24" height="16" fill="#e7e700"/>
<rect x="195" y="361" width="24" height="1" fill="#adaaad"/>
<rect x="195" y="361" width="1.5" height="16" fill="#adaaad"/>
<rect x="217.4" y="361" width="1.6" height="16" fill="#424142"/>
<rect x="195" y="376" width="24" height="1" fill="#424142"/>
<rect x="219" y="361" width="24" height="16" fill="#e7e736"/>
<rect x="219" y="361" width="24" height="1" fill="#adaaad"/>
<rect x="219" y="361" width="1.5" height="16" fill="#adaaad"/>
<rect x="241.4" y="361" width="1.6" height="16" fill="#424142"/>
<rect x="219" y="376" width="24" height="1" fill="#424142"/>
<rect x="243" y="361" width="24" height="16" fill="#e7e75a"/>
<rect x="243" y="361" width="24" height="1" fill="#adaaad"/>
<rect x="243" y="361" width="1.5" height="16" fill="#adaaad"/>
<rect x="265.4" y="361" width="1.6" height="16" fill="#424142"/>
<rect x="243" y="376" width="24" height="1" fill="#424142"/>
<rect x="267" y="361" width="24" height="16" fill="#e7e77a"/>
<rect x="267" y="361" width="24" height="1" fill="#adaaad"/>
<rect x="267" y="361" width="1.5" height="16" fill="#adaaad"/>
<rect x="289.4" y="361" width="1.6" height="16" fill="#424142"/>
<rect x="267" y="376" width="24" height="1" fill="#424142"/>
<rect x="291" y="361" width="24" height="16" fill="#e7e798"/>
<rect x="291" y="361" width="24" height="1" fill="#adaaad"/>
<rect x="291" y="361" width="1.5" height="16" fill="#adaaad"/>
<rect x="313.4" y="361" width="1.6" height="16" fill="#424142"/>
<rect x="291" y="376" width="24" height="1" fill="#424142"/>
<rect x="315" y="361" width="24" height="16" fill="#e7e7b3"/>
<rect x="315" y="361" width="24" height="1" fill="#adaaad"/>
<rect x="315" y="361" width="1.5" height="16" fill="#adaaad"/>
<rect x="337.4" y="361" width="1.6" height="16" fill="#424142"/>
<rect x="315" y="376" width="24" height="1" fill="#424142"/>
<rect x="339" y="361" width="24" height="16" fill="#e7e7ce"/>
<rect x="339" y="361" width="24" height="1" fill="#adaaad"/>
<rect x="339" y="361" width="1.5" height="16" fill="#adaaad"/>
<rect x="361.4" y="361" width="1.6" height="16" fill="#424142"/>
<rect x="339" y="376" width="24" height="1" fill="#424142"/>
<rect x="363" y="361" width="24" height="16" fill="#e7e7ef"/>
<rect x="363" y="361" width="24" height="1" fill="#adaaad"/>
<rect x="363" y="361" width="1.5" height="16" fill="#adaaad"/>
<rect x="385.4" y="361" width="1.6" height="16" fill="#424142"/>
<rect x="363" y="376" width="24" height="1" fill="#424142"/>
<rect x="195" y="377" width="192" height="128" fill="#000"/>
<rect x="195" y="377" width="12" height="0.9" fill="#636163"/>
<rect x="195" y="377" width="1.2" height="8" fill="#636163"/>
<rect x="196.2" y="377.9" width="9.4" height="6.1" fill="#000000"/>
<rect x="207" y="377" width="12" height="0.9" fill="#636163"/>
<rect x="207" y="377" width="1.2" height="8" fill="#636163"/>
<rect x="208.2" y="377.9" width="9.4" height="6.1" fill="#000036"/>
<rect x="219" y="377" width="12" height="0.9" fill="#636163"/>
<rect x="219" y="377" width="1.2" height="8" fill="#636163"/>
<rect x="220.2" y="377.9" width="9.4" height="6.1" fill="#00005a"/>
<rect x="231" y="377" width="12" height="0.9" fill="#636163"/>
<rect x="231" y="377" width="1.2" height="8" fill="#636163"/>
<rect x="232.2" y="377.9" width="9.4" height="6.1" fill="#00007a"/>
<rect x="243" y="377" width="12" height="0.9" fill="#636163"/>
<rect x="243" y="377" width="1.2" height="8" fill="#636163"/>
<rect x="244.2" y="377.9" width="9.4" height="6.1" fill="#000098"/>
<rect x="255" y="377" width="12" height="0.9" fill="#636163"/>
<rect x="255" y="377" width="1.2" height="8" fill="#636163"/>
<rect x="256.2" y="377.9" width="9.4" height="6.1" fill="#0000b3"/>
<rect x="267" y="377" width="12" height="0.9" fill="#636163"/>
<rect x="267" y="377" width="1.2" height="8" fill="#636163"/>
<rect x="268.2" y="377.9" width="9.4" height="6.1" fill="#0000ce"/>
<rect x="279" y="377" width="12" height="0.9" fill="#636163"/>
<rect x="279" y="377" width="1.2" height="8" fill="#636163"/>
<rect x="280.2" y="377.9" width="9.4" height="6.1" fill="#0000ef"/>
<rect x="291" y="377" width="12" height="0.9" fill="#636163"/>
<rect x="291" y="377" width="1.2" height="8" fill="#636163"/>
<rect x="292.2" y="377.9" width="9.4" height="6.1" fill="#360000"/>
<rect x="303" y="377" width="12" height="0.9" fill="#636163"/>
<rect x="303" y="377" width="1.2" height="8" fill="#636163"/>
<rect x="304.2" y="377.9" width="9.4" height="6.1" fill="#360036"/>
<rect x="315" y="377" width="12" height="0.9" fill="#636163"/>
<rect x="315" y="377" width="1.2" height="8" fill="#636163"/>
<rect x="316.2" y="377.9" width="9.4" height="6.1" fill="#36005a"/>
<rect x="327" y="377" width="12" height="0.9" fill="#636163"/>
<rect x="327" y="377" width="1.2" height="8" fill="#636163"/>
<rect x="328.2" y="377.9" width="9.4" height="6.1" fill="#36007a"/>
<rect x="339" y="377" width="12" height="0.9" fill="#636163"/>
<rect x="339" y="377" width="1.2" height="8" fill="#636163"/>
<rect x="340.2" y="377.9" width="9.4" height="6.1" fill="#360098"/>
<rect x="351" y="377" width="12" height="0.9" fill="#636163"/>
<rect x="351" y="377" width="1.2" height="8" fill="#636163"/>
<rect x="352.2" y="377.9" width="9.4" height="6.1" fill="#3600b3"/>
<rect x="363" y="377" width="12" height="0.9" fill="#636163"/>
<rect x="363" y="377" width="1.2" height="8" fill="#636163"/>
<rect x="364.2" y="377.9" width="9.4" height="6.1" fill="#3600ce"/>
<rect x="375" y="377" width="12" height="0.9" fill="#636163"/>
<rect x="375" y="377" width="1.2" height="8" fill="#636163"/>
<rect x="376.2" y="377.9" width="9.4" height="6.1" fill="#3600ef"/>
<rect x="195" y="385" width="12" height="0.9" fill="#636163"/>
<rect x="195" y="385" width="1.2" height="8" fill="#636163"/>
<rect x="196.2" y="385.9" width="9.4" height="6.1" fill="#5a0000"/>
<rect x="207" y="385" width="12" height="0.9" fill="#636163"/>
<rect x="207" y="385" width="1.2" height="8" fill="#636163"/>
<rect x="208.2" y="385.9" width="9.4" height="6.1" fill="#5a0036"/>
<rect x="219" y="385" width="12" height="0.9" fill="#636163"/>
<rect x="219" y="385" width="1.2" height="8" fill="#636163"/>
<rect x="220.2" y="385.9" width="9.4" height="6.1" fill="#5a005a"/>
<rect x="231" y="385" width="12" height="0.9" fill="#636163"/>
<rect x="231" y="385" width="1.2" height="8" fill="#636163"/>
<rect x="232.2" y="385.9" width="9.4" height="6.1" fill="#5a007a"/>
<rect x="243" y="385" width="12" height="0.9" fill="#636163"/>
<rect x="243" y="385" width="1.2" height="8" fill="#636163"/>
<rect x="244.2" y="385.9" width="9.4" height="6.1" fill="#5a0098"/>
<rect x="255" y="385" width="12" height="0.9" fill="#636163"/>
<rect x="255" y="385" width="1.2" height="8" fill="#636163"/>
<rect x="256.2" y="385.9" width="9.4" height="6.1" fill="#5a00b3"/>
<rect x="267" y="385" width="12" height="0.9" fill="#636163"/>
<rect x="267" y="385" width="1.2" height="8" fill="#636163"/>
<rect x="268.2" y="385.9" width="9.4" height="6.1" fill="#5a00ce"/>
<rect x="279" y="385" width="12" height="0.9" fill="#636163"/>
<rect x="279" y="385" width="1.2" height="8" fill="#636163"/>
<rect x="280.2" y="385.9" width="9.4" height="6.1" fill="#5a00ef"/>
<rect x="291" y="385" width="12" height="0.9" fill="#636163"/>
<rect x="291" y="385" width="1.2" height="8" fill="#636163"/>
<rect x="292.2" y="385.9" width="9.4" height="6.1" fill="#7a0000"/>
<rect x="303" y="385" width="12" height="0.9" fill="#636163"/>
<rect x="303" y="385" width="1.2" height="8" fill="#636163"/>
<rect x="304.2" y="385.9" width="9.4" height="6.1" fill="#7a0036"/>
<rect x="315" y="385" width="12" height="0.9" fill="#636163"/>
<rect x="315" y="385" width="1.2" height="8" fill="#636163"/>
<rect x="316.2" y="385.9" width="9.4" height="6.1" fill="#7a005a"/>
<rect x="327" y="385" width="12" height="0.9" fill="#636163"/>
<rect x="327" y="385" width="1.2" height="8" fill="#636163"/>
<rect x="328.2" y="385.9" width="9.4" height="6.1" fill="#7a007a"/>
<rect x="339" y="385" width="12" height="0.9" fill="#636163"/>
<rect x="339" y="385" width="1.2" height="8" fill="#636163"/>
<rect x="340.2" y="385.9" width="9.4" height="6.1" fill="#7a0098"/>
<rect x="351" y="385" width="12" height="0.9" fill="#636163"/>
<rect x="351" y="385" width="1.2" height="8" fill="#636163"/>
<rect x="352.2" y="385.9" width="9.4" height="6.1" fill="#7a00b3"/>
<rect x="363" y="385" width="12" height="0.9" fill="#636163"/>
<rect x="363" y="385" width="1.2" height="8" fill="#636163"/>
<rect x="364.2" y="385.9" width="9.4" height="6.1" fill="#7a00ce"/>
<rect x="375" y="385" width="12" height="0.9" fill="#636163"/>
<rect x="375" y="385" width="1.2" height="8" fill="#636163"/>
<rect x="376.2" y="385.9" width="9.4" height="6.1" fill="#7a00ef"/>
<rect x="195" y="393" width="12" height="0.9" fill="#636163"/>
<rect x="195" y="393" width="1.2" height="8" fill="#636163"/>
<rect x="196.2" y="393.9" width="9.4" height="6.1" fill="#980000"/>
<rect x="207" y="393" width="12" height="0.9" fill="#636163"/>
<rect x="207" y="393" width="1.2" height="8" fill="#636163"/>
<rect x="208.2" y="393.9" width="9.4" height="6.1" fill="#980036"/>
<rect x="219" y="393" width="12" height="0.9" fill="#636163"/>
<rect x="219" y="393" width="1.2" height="8" fill="#636163"/>
<rect x="220.2" y="393.9" width="9.4" height="6.1" fill="#98005a"/>
<rect x="231" y="393" width="12" height="0.9" fill="#636163"/>
<rect x="231" y="393" width="1.2" height="8" fill="#636163"/>
<rect x="232.2" y="393.9" width="9.4" height="6.1" fill="#98007a"/>
<rect x="243" y="393" width="12" height="0.9" fill="#636163"/>
<rect x="243" y="393" width="1.2" height="8" fill="#636163"/>
<rect x="244.2" y="393.9" width="9.4" height="6.1" fill="#980098"/>
<rect x="255" y="393" width="12" height="0.9" fill="#636163"/>
<rect x="255" y="393" width="1.2" height="8" fill="#636163"/>
<rect x="256.2" y="393.9" width="9.4" height="6.1" fill="#9800b3"/>
<rect x="267" y="393" width="12" height="0.9" fill="#636163"/>
<rect x="267" y="393" width="1.2" height="8" fill="#636163"/>
<rect x="268.2" y="393.9" width="9.4" height="6.1" fill="#9800ce"/>
<rect x="279" y="393" width="12" height="0.9" fill="#636163"/>
<rect x="279" y="393" width="1.2" height="8" fill="#636163"/>
<rect x="280.2" y="393.9" width="9.4" height="6.1" fill="#9800ef"/>
<rect x="291" y="393" width="12" height="0.9" fill="#636163"/>
<rect x="291" y="393" width="1.2" height="8" fill="#636163"/>
<rect x="292.2" y="393.9" width="9.4" height="6.1" fill="#b30000"/>
<rect x="303" y="393" width="12" height="0.9" fill="#636163"/>
<rect x="303" y="393" width="1.2" height="8" fill="#636163"/>
<rect x="304.2" y="393.9" width="9.4" height="6.1" fill="#b30036"/>
<rect x="315" y="393" width="12" height="0.9" fill="#636163"/>
<rect x="315" y="393" width="1.2" height="8" fill="#636163"/>
<rect x="316.2" y="393.9" width="9.4" height="6.1" fill="#b3005a"/>
<rect x="327" y="393" width="12" height="0.9" fill="#636163"/>
<rect x="327" y="393" width="1.2" height="8" fill="#636163"/>
<rect x="328.2" y="393.9" width="9.4" height="6.1" fill="#b3007a"/>
<rect x="339" y="393" width="12" height="0.9" fill="#636163"/>
<rect x="339" y="393" width="1.2" height="8" fill="#636163"/>
<rect x="340.2" y="393.9" width="9.4" height="6.1" fill="#b30098"/>
<rect x="351" y="393" width="12" height="0.9" fill="#636163"/>
<rect x="351" y="393" width="1.2" height="8" fill="#636163"/>
<rect x="352.2" y="393.9" width="9.4" height="6.1" fill="#b300b3"/>
<rect x="363" y="393" width="12" height="0.9" fill="#636163"/>
<rect x="363" y="393" width="1.2" height="8" fill="#636163"/>
<rect x="364.2" y="393.9" width="9.4" height="6.1" fill="#b300ce"/>
<rect x="375" y="393" width="12" height="0.9" fill="#636163"/>
<rect x="375" y="393" width="1.2" height="8" fill="#636163"/>
<rect x="376.2" y="393.9" width="9.4" height="6.1" fill="#b300ef"/>
<rect x="195" y="401" width="12" height="0.9" fill="#636163"/>
<rect x="195" y="401" width="1.2" height="8" fill="#636163"/>
<rect x="196.2" y="401.9" width="9.4" height="6.1" fill="#ce0000"/>
<rect x="207" y="401" width="12" height="0.9" fill="#636163"/>
<rect x="207" y="401" width="1.2" height="8" fill="#636163"/>
<rect x="208.2" y="401.9" width="9.4" height="6.1" fill="#ce0036"/>
<rect x="219" y="401" width="12" height="0.9" fill="#636163"/>
<rect x="219" y="401" width="1.2" height="8" fill="#636163"/>
<rect x="220.2" y="401.9" width="9.4" height="6.1" fill="#ce005a"/>
<rect x="231" y="401" width="12" height="0.9" fill="#636163"/>
<rect x="231" y="401" width="1.2" height="8" fill="#636163"/>
<rect x="232.2" y="401.9" width="9.4" height="6.1" fill="#ce007a"/>
<rect x="243" y="401" width="12" height="0.9" fill="#636163"/>
<rect x="243" y="401" width="1.2" height="8" fill="#636163"/>
<rect x="244.2" y="401.9" width="9.4" height="6.1" fill="#ce0098"/>
<rect x="255" y="401" width="12" height="0.9" fill="#636163"/>
<rect x="255" y="401" width="1.2" height="8" fill="#636163"/>
<rect x="256.2" y="401.9" width="9.4" height="6.1" fill="#ce00b3"/>
<rect x="267" y="401" width="12" height="0.9" fill="#636163"/>
<rect x="267" y="401" width="1.2" height="8" fill="#636163"/>
<rect x="268.2" y="401.9" width="9.4" height="6.1" fill="#ce00ce"/>
<rect x="279" y="401" width="12" height="0.9" fill="#636163"/>
<rect x="279" y="401" width="1.2" height="8" fill="#636163"/>
<rect x="280.2" y="401.9" width="9.4" height="6.1" fill="#ce00ef"/>
<rect x="291" y="401" width="12" height="0.9" fill="#636163"/>
<rect x="291" y="401" width="1.2" height="8" fill="#636163"/>
<rect x="292.2" y="401.9" width="9.4" height="6.1" fill="#e70000"/>
<rect x="303" y="401" width="12" height="0.9" fill="#636163"/>
<rect x="303" y="401" width="1.2" height="8" fill="#636163"/>
<rect x="304.2" y="401.9" width="9.4" height="6.1" fill="#e70036"/>
<rect x="315" y="401" width="12" height="0.9" fill="#636163"/>
<rect x="315" y="401" width="1.2" height="8" fill="#636163"/>
<rect x="316.2" y="401.9" width="9.4" height="6.1" fill="#e7005a"/>
<rect x="327" y="401" width="12" height="0.9" fill="#636163"/>
<rect x="327" y="401" width="1.2" height="8" fill="#636163"/>
<rect x="328.2" y="401.9" width="9.4" height="6.1" fill="#e7007a"/>
<rect x="339" y="401" width="12" height="0.9" fill="#636163"/>
<rect x="339" y="401" width="1.2" height="8" fill="#636163"/>
<rect x="340.2" y="401.9" width="9.4" height="6.1" fill="#e70098"/>
<rect x="351" y="401" width="12" height="0.9" fill="#636163"/>
<rect x="351" y="401" width="1.2" height="8" fill="#636163"/>
<rect x="352.2" y="401.9" width="9.4" height="6.1" fill="#e700b3"/>
<rect x="363" y="401" width="12" height="0.9" fill="#636163"/>
<rect x="363" y="401" width="1.2" height="8" fill="#636163"/>
<rect x="364.2" y="401.9" width="9.4" height="6.1" fill="#e700ce"/>
<rect x="375" y="401" width="12" height="0.9" fill="#636163"/>
<rect x="375" y="401" width="1.2" height="8" fill="#636163"/>
<rect x="376.2" y="401.9" width="9.4" height="6.1" fill="#e700ef"/>
<rect x="195" y="409" width="12" height="0.9" fill="#636163"/>
<rect x="195" y="409" width="1.2" height="8" fill="#636163"/>
<rect x="196.2" y="409.9" width="9.4" height="6.1" fill="#006b00"/>
<rect x="207" y="409" width="12" height="0.9" fill="#636163"/>
<rect x="207" y="409" width="1.2" height="8" fill="#636163"/>
<rect x="208.2" y="409.9" width="9.4" height="6.1" fill="#006b36"/>
<rect x="219" y="409" width="12" height="0.9" fill="#636163"/>
<rect x="219" y="409" width="1.2" height="8" fill="#636163"/>
<rect x="220.2" y="409.9" width="9.4" height="6.1" fill="#006b5a"/>
<rect x="231" y="409" width="12" height="0.9" fill="#636163"/>
<rect x="231" y="409" width="1.2" height="8" fill="#636163"/>
<rect x="232.2" y="409.9" width="9.4" height="6.1" fill="#006b7a"/>
<rect x="243" y="409" width="12" height="0.9" fill="#636163"/>
<rect x="243" y="409" width="1.2" height="8" fill="#636163"/>
<rect x="244.2" y="409.9" width="9.4" height="6.1" fill="#006b98"/>
<rect x="255" y="409" width="12" height="0.9" fill="#636163"/>
<rect x="255" y="409" width="1.2" height="8" fill="#636163"/>
<rect x="256.2" y="409.9" width="9.4" height="6.1" fill="#006bb3"/>
<rect x="267" y="409" width="12" height="0.9" fill="#636163"/>
<rect x="267" y="409" width="1.2" height="8" fill="#636163"/>
<rect x="268.2" y="409.9" width="9.4" height="6.1" fill="#006bce"/>
<rect x="279" y="409" width="12" height="0.9" fill="#636163"/>
<rect x="279" y="409" width="1.2" height="8" fill="#636163"/>
<rect x="280.2" y="409.9" width="9.4" height="6.1" fill="#006bef"/>
<rect x="291" y="409" width="12" height="0.9" fill="#636163"/>
<rect x="291" y="409" width="1.2" height="8" fill="#636163"/>
<rect x="292.2" y="409.9" width="9.4" height="6.1" fill="#366b00"/>
<rect x="303" y="409" width="12" height="0.9" fill="#636163"/>
<rect x="303" y="409" width="1.2" height="8" fill="#636163"/>
<rect x="304.2" y="409.9" width="9.4" height="6.1" fill="#366b36"/>
<rect x="315" y="409" width="12" height="0.9" fill="#636163"/>
<rect x="315" y="409" width="1.2" height="8" fill="#636163"/>
<rect x="316.2" y="409.9" width="9.4" height="6.1" fill="#366b5a"/>
<rect x="327" y="409" width="12" height="0.9" fill="#636163"/>
<rect x="327" y="409" width="1.2" height="8" fill="#636163"/>
<rect x="328.2" y="409.9" width="9.4" height="6.1" fill="#366b7a"/>
<rect x="339" y="409" width="12" height="0.9" fill="#636163"/>
<rect x="339" y="409" width="1.2" height="8" fill="#636163"/>
<rect x="340.2" y="409.9" width="9.4" height="6.1" fill="#366b98"/>
<rect x="351" y="409" width="12" height="0.9" fill="#636163"/>
<rect x="351" y="409" width="1.2" height="8" fill="#636163"/>
<rect x="352.2" y="409.9" width="9.4" height="6.1" fill="#366bb3"/>
<rect x="363" y="409" width="12" height="0.9" fill="#636163"/>
<rect x="363" y="409" width="1.2" height="8" fill="#636163"/>
<rect x="364.2" y="409.9" width="9.4" height="6.1" fill="#366bce"/>
<rect x="375" y="409" width="12" height="0.9" fill="#636163"/>
<rect x="375" y="409" width="1.2" height="8" fill="#636163"/>
<rect x="376.2" y="409.9" width="9.4" height="6.1" fill="#366bef"/>
<rect x="195" y="417" width="12" height="0.9" fill="#636163"/>
<rect x="195" y="417" width="1.2" height="8" fill="#636163"/>
<rect x="196.2" y="417.9" width="9.4" height="6.1" fill="#5a6b00"/>
<rect x="207" y="417" width="12" height="0.9" fill="#636163"/>
<rect x="207" y="417" width="1.2" height="8" fill="#636163"/>
<rect x="208.2" y="417.9" width="9.4" height="6.1" fill="#5a6b36"/>
<rect x="219" y="417" width="12" height="0.9" fill="#636163"/>
<rect x="219" y="417" width="1.2" height="8" fill="#636163"/>
<rect x="220.2" y="417.9" width="9.4" height="6.1" fill="#5a6b5a"/>
<rect x="231" y="417" width="12" height="0.9" fill="#636163"/>
<rect x="231" y="417" width="1.2" height="8" fill="#636163"/>
<rect x="232.2" y="417.9" width="9.4" height="6.1" fill="#5a6b7a"/>
<rect x="243" y="417" width="12" height="0.9" fill="#636163"/>
<rect x="243" y="417" width="1.2" height="8" fill="#636163"/>
<rect x="244.2" y="417.9" width="9.4" height="6.1" fill="#5a6b98"/>
<rect x="255" y="417" width="12" height="0.9" fill="#636163"/>
<rect x="255" y="417" width="1.2" height="8" fill="#636163"/>
<rect x="256.2" y="417.9" width="9.4" height="6.1" fill="#5a6bb3"/>
<rect x="267" y="417" width="12" height="0.9" fill="#636163"/>
<rect x="267" y="417" width="1.2" height="8" fill="#636163"/>
<rect x="268.2" y="417.9" width="9.4" height="6.1" fill="#5a6bce"/>
<rect x="279" y="417" width="12" height="0.9" fill="#636163"/>
<rect x="279" y="417" width="1.2" height="8" fill="#636163"/>
<rect x="280.2" y="417.9" width="9.4" height="6.1" fill="#5a6bef"/>
<rect x="291" y="417" width="12" height="0.9" fill="#636163"/>
<rect x="291" y="417" width="1.2" height="8" fill="#636163"/>
<rect x="292.2" y="417.9" width="9.4" height="6.1" fill="#7a6b00"/>
<rect x="303" y="417" width="12" height="0.9" fill="#636163"/>
<rect x="303" y="417" width="1.2" height="8" fill="#636163"/>
<rect x="304.2" y="417.9" width="9.4" height="6.1" fill="#7a6b36"/>
<rect x="315" y="417" width="12" height="0.9" fill="#636163"/>
<rect x="315" y="417" width="1.2" height="8" fill="#636163"/>
<rect x="316.2" y="417.9" width="9.4" height="6.1" fill="#7a6b5a"/>
<rect x="327" y="417" width="12" height="0.9" fill="#636163"/>
<rect x="327" y="417" width="1.2" height="8" fill="#636163"/>
<rect x="328.2" y="417.9" width="9.4" height="6.1" fill="#7a6b7a"/>
<rect x="339" y="417" width="12" height="0.9" fill="#636163"/>
<rect x="339" y="417" width="1.2" height="8" fill="#636163"/>
<rect x="340.2" y="417.9" width="9.4" height="6.1" fill="#7a6b98"/>
<rect x="351" y="417" width="12" height="0.9" fill="#636163"/>
<rect x="351" y="417" width="1.2" height="8" fill="#636163"/>
<rect x="352.2" y="417.9" width="9.4" height="6.1" fill="#7a6bb3"/>
<rect x="363" y="417" width="12" height="0.9" fill="#636163"/>
<rect x="363" y="417" width="1.2" height="8" fill="#636163"/>
<rect x="364.2" y="417.9" width="9.4" height="6.1" fill="#7a6bce"/>
<rect x="375" y="417" width="12" height="0.9" fill="#636163"/>
<rect x="375" y="417" width="1.2" height="8" fill="#636163"/>
<rect x="376.2" y="417.9" width="9.4" height="6.1" fill="#7a6bef"/>
<rect x="195" y="425" width="12" height="0.9" fill="#636163"/>
<rect x="195" y="425" width="1.2" height="8" fill="#636163"/>
<rect x="196.2" y="425.9" width="9.4" height="6.1" fill="#986b00"/>
<rect x="207" y="425" width="12" height="0.9" fill="#636163"/>
<rect x="207" y="425" width="1.2" height="8" fill="#636163"/>
<rect x="208.2" y="425.9" width="9.4" height="6.1" fill="#986b36"/>
<rect x="219" y="425" width="12" height="0.9" fill="#636163"/>
<rect x="219" y="425" width="1.2" height="8" fill="#636163"/>
<rect x="220.2" y="425.9" width="9.4" height="6.1" fill="#986b5a"/>
<rect x="231" y="425" width="12" height="0.9" fill="#636163"/>
<rect x="231" y="425" width="1.2" height="8" fill="#636163"/>
<rect x="232.2" y="425.9" width="9.4" height="6.1" fill="#986b7a"/>
<rect x="243" y="425" width="12" height="0.9" fill="#636163"/>
<rect x="243" y="425" width="1.2" height="8" fill="#636163"/>
<rect x="244.2" y="425.9" width="9.4" height="6.1" fill="#986b98"/>
<rect x="255" y="425" width="12" height="0.9" fill="#636163"/>
<rect x="255" y="425" width="1.2" height="8" fill="#636163"/>
<rect x="256.2" y="425.9" width="9.4" height="6.1" fill="#986bb3"/>
<rect x="267" y="425" width="12" height="0.9" fill="#636163"/>
<rect x="267" y="425" width="1.2" height="8" fill="#636163"/>
<rect x="268.2" y="425.9" width="9.4" height="6.1" fill="#986bce"/>
<rect x="279" y="425" width="12" height="0.9" fill="#636163"/>
<rect x="279" y="425" width="1.2" height="8" fill="#636163"/>
<rect x="280.2" y="425.9" width="9.4" height="6.1" fill="#986bef"/>
<rect x="291" y="425" width="12" height="0.9" fill="#636163"/>
<rect x="291" y="425" width="1.2" height="8" fill="#636163"/>
<rect x="292.2" y="425.9" width="9.4" height="6.1" fill="#b36b00"/>
<rect x="303" y="425" width="12" height="0.9" fill="#636163"/>
<rect x="303" y="425" width="1.2" height="8" fill="#636163"/>
<rect x="304.2" y="425.9" width="9.4" height="6.1" fill="#b36b36"/>
<rect x="315" y="425" width="12" height="0.9" fill="#636163"/>
<rect x="315" y="425" width="1.2" height="8" fill="#636163"/>
<rect x="316.2" y="425.9" width="9.4" height="6.1" fill="#b36b5a"/>
<rect x="327" y="425" width="12" height="0.9" fill="#636163"/>
<rect x="327" y="425" width="1.2" height="8" fill="#636163"/>
<rect x="328.2" y="425.9" width="9.4" height="6.1" fill="#b36b7a"/>
<rect x="339" y="425" width="12" height="0.9" fill="#636163"/>
<rect x="339" y="425" width="1.2" height="8" fill="#636163"/>
<rect x="340.2" y="425.9" width="9.4" height="6.1" fill="#b36b98"/>
<rect x="351" y="425" width="12" height="0.9" fill="#636163"/>
<rect x="351" y="425" width="1.2" height="8" fill="#636163"/>
<rect x="352.2" y="425.9" width="9.4" height="6.1" fill="#b36bb3"/>
<rect x="363" y="425" width="12" height="0.9" fill="#636163"/>
<rect x="363" y="425" width="1.2" height="8" fill="#636163"/>
<rect x="364.2" y="425.9" width="9.4" height="6.1" fill="#b36bce"/>
<rect x="375" y="425" width="12" height="0.9" fill="#636163"/>
<rect x="375" y="425" width="1.2" height="8" fill="#636163"/>
<rect x="376.2" y="425.9" width="9.4" height="6.1" fill="#b36bef"/>
<rect x="195" y="433" width="12" height="0.9" fill="#636163"/>
<rect x="195" y="433" width="1.2" height="8" fill="#636163"/>
<rect x="196.2" y="433.9" width="9.4" height="6.1" fill="#ce6b00"/>
<rect x="207" y="433" width="12" height="0.9" fill="#636163"/>
<rect x="207" y="433" width="1.2" height="8" fill="#636163"/>
<rect x="208.2" y="433.9" width="9.4" height="6.1" fill="#ce6b36"/>
<rect x="219" y="433" width="12" height="0.9" fill="#636163"/>
<rect x="219" y="433" width="1.2" height="8" fill="#636163"/>
<rect x="220.2" y="433.9" width="9.4" height="6.1" fill="#ce6b5a"/>
<rect x="231" y="433" width="12" height="0.9" fill="#636163"/>
<rect x="231" y="433" width="1.2" height="8" fill="#636163"/>
<rect x="232.2" y="433.9" width="9.4" height="6.1" fill="#ce6b7a"/>
<rect x="243" y="433" width="12" height="0.9" fill="#636163"/>
<rect x="243" y="433" width="1.2" height="8" fill="#636163"/>
<rect x="244.2" y="433.9" width="9.4" height="6.1" fill="#ce6b98"/>
<rect x="255" y="433" width="12" height="0.9" fill="#636163"/>
<rect x="255" y="433" width="1.2" height="8" fill="#636163"/>
<rect x="256.2" y="433.9" width="9.4" height="6.1" fill="#ce6bb3"/>
<rect x="267" y="433" width="12" height="0.9" fill="#636163"/>
<rect x="267" y="433" width="1.2" height="8" fill="#636163"/>
<rect x="268.2" y="433.9" width="9.4" height="6.1" fill="#ce6bce"/>
<rect x="279" y="433" width="12" height="0.9" fill="#636163"/>
<rect x="279" y="433" width="1.2" height="8" fill="#636163"/>
<rect x="280.2" y="433.9" width="9.4" height="6.1" fill="#ce6bef"/>
<rect x="291" y="433" width="12" height="0.9" fill="#636163"/>
<rect x="291" y="433" width="1.2" height="8" fill="#636163"/>
<rect x="292.2" y="433.9" width="9.4" height="6.1" fill="#e76b00"/>
<rect x="303" y="433" width="12" height="0.9" fill="#636163"/>
<rect x="303" y="433" width="1.2" height="8" fill="#636163"/>
<rect x="304.2" y="433.9" width="9.4" height="6.1" fill="#e76b36"/>
<rect x="315" y="433" width="12" height="0.9" fill="#636163"/>
<rect x="315" y="433" width="1.2" height="8" fill="#636163"/>
<rect x="316.2" y="433.9" width="9.4" height="6.1" fill="#e76b5a"/>
<rect x="327" y="433" width="12" height="0.9" fill="#636163"/>
<rect x="327" y="433" width="1.2" height="8" fill="#636163"/>
<rect x="328.2" y="433.9" width="9.4" height="6.1" fill="#e76b7a"/>
<rect x="339" y="433" width="12" height="0.9" fill="#636163"/>
<rect x="339" y="433" width="1.2" height="8" fill="#636163"/>
<rect x="340.2" y="433.9" width="9.4" height="6.1" fill="#e76b98"/>
<rect x="351" y="433" width="12" height="0.9" fill="#636163"/>
<rect x="351" y="433" width="1.2" height="8" fill="#636163"/>
<rect x="352.2" y="433.9" width="9.4" height="6.1" fill="#e76bb3"/>
<rect x="363" y="433" width="12" height="0.9" fill="#636163"/>
<rect x="363" y="433" width="1.2" height="8" fill="#636163"/>
<rect x="364.2" y="433.9" width="9.4" height="6.1" fill="#e76bce"/>
<rect x="375" y="433" width="12" height="0.9" fill="#636163"/>
<rect x="375" y="433" width="1.2" height="8" fill="#636163"/>
<rect x="376.2" y="433.9" width="9.4" height="6.1" fill="#e76bef"/>
<rect x="195" y="441" width="12" height="0.9" fill="#636163"/>
<rect x="195" y="441" width="1.2" height="8" fill="#636163"/>
<rect x="196.2" y="441.9" width="9.4" height="6.1" fill="#00ac00"/>
<rect x="207" y="441" width="12" height="0.9" fill="#636163"/>
<rect x="207" y="441" width="1.2" height="8" fill="#636163"/>
<rect x="208.2" y="441.9" width="9.4" height="6.1" fill="#00ac36"/>
<rect x="219" y="441" width="12" height="0.9" fill="#636163"/>
<rect x="219" y="441" width="1.2" height="8" fill="#636163"/>
<rect x="220.2" y="441.9" width="9.4" height="6.1" fill="#00ac5a"/>
<rect x="231" y="441" width="12" height="0.9" fill="#636163"/>
<rect x="231" y="441" width="1.2" height="8" fill="#636163"/>
<rect x="232.2" y="441.9" width="9.4" height="6.1" fill="#00ac7a"/>
<rect x="243" y="441" width="12" height="0.9" fill="#636163"/>
<rect x="243" y="441" width="1.2" height="8" fill="#636163"/>
<rect x="244.2" y="441.9" width="9.4" height="6.1" fill="#00ac98"/>
<rect x="255" y="441" width="12" height="0.9" fill="#636163"/>
<rect x="255" y="441" width="1.2" height="8" fill="#636163"/>
<rect x="256.2" y="441.9" width="9.4" height="6.1" fill="#00acb3"/>
<rect x="267" y="441" width="12" height="0.9" fill="#636163"/>
<rect x="267" y="441" width="1.2" height="8" fill="#636163"/>
<rect x="268.2" y="441.9" width="9.4" height="6.1" fill="#00acce"/>
<rect x="279" y="441" width="12" height="0.9" fill="#636163"/>
<rect x="279" y="441" width="1.2" height="8" fill="#636163"/>
<rect x="280.2" y="441.9" width="9.4" height="6.1" fill="#00acef"/>
<rect x="291" y="441" width="12" height="0.9" fill="#636163"/>
<rect x="291" y="441" width="1.2" height="8" fill="#636163"/>
<rect x="292.2" y="441.9" width="9.4" height="6.1" fill="#36ac00"/>
<rect x="303" y="441" width="12" height="0.9" fill="#636163"/>
<rect x="303" y="441" width="1.2" height="8" fill="#636163"/>
<rect x="304.2" y="441.9" width="9.4" height="6.1" fill="#36ac36"/>
<rect x="315" y="441" width="12" height="0.9" fill="#636163"/>
<rect x="315" y="441" width="1.2" height="8" fill="#636163"/>
<rect x="316.2" y="441.9" width="9.4" height="6.1" fill="#36ac5a"/>
<rect x="327" y="441" width="12" height="0.9" fill="#636163"/>
<rect x="327" y="441" width="1.2" height="8" fill="#636163"/>
<rect x="328.2" y="441.9" width="9.4" height="6.1" fill="#36ac7a"/>
<rect x="339" y="441" width="12" height="0.9" fill="#636163"/>
<rect x="339" y="441" width="1.2" height="8" fill="#636163"/>
<rect x="340.2" y="441.9" width="9.4" height="6.1" fill="#36ac98"/>
<rect x="351" y="441" width="12" height="0.9" fill="#636163"/>
<rect x="351" y="441" width="1.2" height="8" fill="#636163"/>
<rect x="352.2" y="441.9" width="9.4" height="6.1" fill="#36acb3"/>
<rect x="363" y="441" width="12" height="0.9" fill="#636163"/>
<rect x="363" y="441" width="1.2" height="8" fill="#636163"/>
<rect x="364.2" y="441.9" width="9.4" height="6.1" fill="#36acce"/>
<rect x="375" y="441" width="12" height="0.9" fill="#636163"/>
<rect x="375" y="441" width="1.2" height="8" fill="#636163"/>
<rect x="376.2" y="441.9" width="9.4" height="6.1" fill="#36acef"/>
<rect x="195" y="449" width="12" height="0.9" fill="#636163"/>
<rect x="195" y="449" width="1.2" height="8" fill="#636163"/>
<rect x="196.2" y="449.9" width="9.4" height="6.1" fill="#5aac00"/>
<rect x="207" y="449" width="12" height="0.9" fill="#636163"/>
<rect x="207" y="449" width="1.2" height="8" fill="#636163"/>
<rect x="208.2" y="449.9" width="9.4" height="6.1" fill="#5aac36"/>
<rect x="219" y="449" width="12" height="0.9" fill="#636163"/>
<rect x="219" y="449" width="1.2" height="8" fill="#636163"/>
<rect x="220.2" y="449.9" width="9.4" height="6.1" fill="#5aac5a"/>
<rect x="231" y="449" width="12" height="0.9" fill="#636163"/>
<rect x="231" y="449" width="1.2" height="8" fill="#636163"/>
<rect x="232.2" y="449.9" width="9.4" height="6.1" fill="#5aac7a"/>
<rect x="243" y="449" width="12" height="0.9" fill="#636163"/>
<rect x="243" y="449" width="1.2" height="8" fill="#636163"/>
<rect x="244.2" y="449.9" width="9.4" height="6.1" fill="#5aac98"/>
<rect x="255" y="449" width="12" height="0.9" fill="#636163"/>
<rect x="255" y="449" width="1.2" height="8" fill="#636163"/>
<rect x="256.2" y="449.9" width="9.4" height="6.1" fill="#5aacb3"/>
<rect x="267" y="449" width="12" height="0.9" fill="#636163"/>
<rect x="267" y="449" width="1.2" height="8" fill="#636163"/>
<rect x="268.2" y="449.9" width="9.4" height="6.1" fill="#5aacce"/>
<rect x="279" y="449" width="12" height="0.9" fill="#636163"/>
<rect x="279" y="449" width="1.2" height="8" fill="#636163"/>
<rect x="280.2" y="449.9" width="9.4" height="6.1" fill="#5aacef"/>
<rect x="291" y="449" width="12" height="0.9" fill="#636163"/>
<rect x="291" y="449" width="1.2" height="8" fill="#636163"/>
<rect x="292.2" y="449.9" width="9.4" height="6.1" fill="#7aac00"/>
<rect x="303" y="449" width="12" height="0.9" fill="#636163"/>
<rect x="303" y="449" width="1.2" height="8" fill="#636163"/>
<rect x="304.2" y="449.9" width="9.4" height="6.1" fill="#7aac36"/>
<rect x="315" y="449" width="12" height="0.9" fill="#636163"/>
<rect x="315" y="449" width="1.2" height="8" fill="#636163"/>
<rect x="316.2" y="449.9" width="9.4" height="6.1" fill="#7aac5a"/>
<rect x="327" y="449" width="12" height="0.9" fill="#636163"/>
<rect x="327" y="449" width="1.2" height="8" fill="#636163"/>
<rect x="328.2" y="449.9" width="9.4" height="6.1" fill="#7aac7a"/>
<rect x="339" y="449" width="12" height="0.9" fill="#636163"/>
<rect x="339" y="449" width="1.2" height="8" fill="#636163"/>
<rect x="340.2" y="449.9" width="9.4" height="6.1" fill="#7aac98"/>
<rect x="351" y="449" width="12" height="0.9" fill="#636163"/>
<rect x="351" y="449" width="1.2" height="8" fill="#636163"/>
<rect x="352.2" y="449.9" width="9.4" height="6.1" fill="#7aacb3"/>
<rect x="363" y="449" width="12" height="0.9" fill="#636163"/>
<rect x="363" y="449" width="1.2" height="8" fill="#636163"/>
<rect x="364.2" y="449.9" width="9.4" height="6.1" fill="#7aacce"/>
<rect x="375" y="449" width="12" height="0.9" fill="#636163"/>
<rect x="375" y="449" width="1.2" height="8" fill="#636163"/>
<rect x="376.2" y="449.9" width="9.4" height="6.1" fill="#7aacef"/>
<rect x="195" y="457" width="12" height="0.9" fill="#636163"/>
<rect x="195" y="457" width="1.2" height="8" fill="#636163"/>
<rect x="196.2" y="457.9" width="9.4" height="6.1" fill="#98ac00"/>
<rect x="207" y="457" width="12" height="0.9" fill="#636163"/>
<rect x="207" y="457" width="1.2" height="8" fill="#636163"/>
<rect x="208.2" y="457.9" width="9.4" height="6.1" fill="#98ac36"/>
<rect x="219" y="457" width="12" height="0.9" fill="#636163"/>
<rect x="219" y="457" width="1.2" height="8" fill="#636163"/>
<rect x="220.2" y="457.9" width="9.4" height="6.1" fill="#98ac5a"/>
<rect x="231" y="457" width="12" height="0.9" fill="#636163"/>
<rect x="231" y="457" width="1.2" height="8" fill="#636163"/>
<rect x="232.2" y="457.9" width="9.4" height="6.1" fill="#98ac7a"/>
<rect x="243" y="457" width="12" height="0.9" fill="#636163"/>
<rect x="243" y="457" width="1.2" height="8" fill="#636163"/>
<rect x="244.2" y="457.9" width="9.4" height="6.1" fill="#98ac98"/>
<rect x="255" y="457" width="12" height="0.9" fill="#636163"/>
<rect x="255" y="457" width="1.2" height="8" fill="#636163"/>
<rect x="256.2" y="457.9" width="9.4" height="6.1" fill="#98acb3"/>
<rect x="267" y="457" width="12" height="0.9" fill="#636163"/>
<rect x="267" y="457" width="1.2" height="8" fill="#636163"/>
<rect x="268.2" y="457.9" width="9.4" height="6.1" fill="#98acce"/>
<rect x="279" y="457" width="12" height="0.9" fill="#636163"/>
<rect x="279" y="457" width="1.2" height="8" fill="#636163"/>
<rect x="280.2" y="457.9" width="9.4" height="6.1" fill="#98acef"/>
<rect x="291" y="457" width="12" height="0.9" fill="#636163"/>
<rect x="291" y="457" width="1.2" height="8" fill="#636163"/>
<rect x="292.2" y="457.9" width="9.4" height="6.1" fill="#b3ac00"/>
<rect x="303" y="457" width="12" height="0.9" fill="#636163"/>
<rect x="303" y="457" width="1.2" height="8" fill="#636163"/>
<rect x="304.2" y="457.9" width="9.4" height="6.1" fill="#b3ac36"/>
<rect x="315" y="457" width="12" height="0.9" fill="#636163"/>
<rect x="315" y="457" width="1.2" height="8" fill="#636163"/>
<rect x="316.2" y="457.9" width="9.4" height="6.1" fill="#b3ac5a"/>
<rect x="327" y="457" width="12" height="0.9" fill="#636163"/>
<rect x="327" y="457" width="1.2" height="8" fill="#636163"/>
<rect x="328.2" y="457.9" width="9.4" height="6.1" fill="#b3ac7a"/>
<rect x="339" y="457" width="12" height="0.9" fill="#636163"/>
<rect x="339" y="457" width="1.2" height="8" fill="#636163"/>
<rect x="340.2" y="457.9" width="9.4" height="6.1" fill="#b3ac98"/>
<rect x="351" y="457" width="12" height="0.9" fill="#636163"/>
<rect x="351" y="457" width="1.2" height="8" fill="#636163"/>
<rect x="352.2" y="457.9" width="9.4" height="6.1" fill="#b3acb3"/>
<rect x="363" y="457" width="12" height="0.9" fill="#636163"/>
<rect x="363" y="457" width="1.2" height="8" fill="#636163"/>
<rect x="364.2" y="457.9" width="9.4" height="6.1" fill="#b3acce"/>
<rect x="375" y="457" width="12" height="0.9" fill="#636163"/>
<rect x="375" y="457" width="1.2" height="8" fill="#636163"/>
<rect x="376.2" y="457.9" width="9.4" height="6.1" fill="#b3acef"/>
<rect x="195" y="465" width="12" height="0.9" fill="#636163"/>
<rect x="195" y="465" width="1.2" height="8" fill="#636163"/>
<rect x="196.2" y="465.9" width="9.4" height="6.1" fill="#ceac00"/>
<rect x="207" y="465" width="12" height="0.9" fill="#636163"/>
<rect x="207" y="465" width="1.2" height="8" fill="#636163"/>
<rect x="208.2" y="465.9" width="9.4" height="6.1" fill="#ceac36"/>
<rect x="219" y="465" width="12" height="0.9" fill="#636163"/>
<rect x="219" y="465" width="1.2" height="8" fill="#636163"/>
<rect x="220.2" y="465.9" width="9.4" height="6.1" fill="#ceac5a"/>
<rect x="231" y="465" width="12" height="0.9" fill="#636163"/>
<rect x="231" y="465" width="1.2" height="8" fill="#636163"/>
<rect x="232.2" y="465.9" width="9.4" height="6.1" fill="#ceac7a"/>
<rect x="243" y="465" width="12" height="0.9" fill="#636163"/>
<rect x="243" y="465" width="1.2" height="8" fill="#636163"/>
<rect x="244.2" y="465.9" width="9.4" height="6.1" fill="#ceac98"/>
<rect x="255" y="465" width="12" height="0.9" fill="#636163"/>
<rect x="255" y="465" width="1.2" height="8" fill="#636163"/>
<rect x="256.2" y="465.9" width="9.4" height="6.1" fill="#ceacb3"/>
<rect x="267" y="465" width="12" height="0.9" fill="#636163"/>
<rect x="267" y="465" width="1.2" height="8" fill="#636163"/>
<rect x="268.2" y="465.9" width="9.4" height="6.1" fill="#ceacce"/>
<rect x="279" y="465" width="12" height="0.9" fill="#636163"/>
<rect x="279" y="465" width="1.2" height="8" fill="#636163"/>
<rect x="280.2" y="465.9" width="9.4" height="6.1" fill="#ceacef"/>
<rect x="291" y="465" width="12" height="0.9" fill="#636163"/>
<rect x="291" y="465" width="1.2" height="8" fill="#636163"/>
<rect x="292.2" y="465.9" width="9.4" height="6.1" fill="#e7ac00"/>
<rect x="303" y="465" width="12" height="0.9" fill="#636163"/>
<rect x="303" y="465" width="1.2" height="8" fill="#636163"/>
<rect x="304.2" y="465.9" width="9.4" height="6.1" fill="#e7ac36"/>
<rect x="315" y="465" width="12" height="0.9" fill="#636163"/>
<rect x="315" y="465" width="1.2" height="8" fill="#636163"/>
<rect x="316.2" y="465.9" width="9.4" height="6.1" fill="#e7ac5a"/>
<rect x="327" y="465" width="12" height="0.9" fill="#636163"/>
<rect x="327" y="465" width="1.2" height="8" fill="#636163"/>
<rect x="328.2" y="465.9" width="9.4" height="6.1" fill="#e7ac7a"/>
<rect x="339" y="465" width="12" height="0.9" fill="#636163"/>
<rect x="339" y="465" width="1.2" height="8" fill="#636163"/>
<rect x="340.2" y="465.9" width="9.4" height="6.1" fill="#e7ac98"/>
<rect x="351" y="465" width="12" height="0.9" fill="#636163"/>
<rect x="351" y="465" width="1.2" height="8" fill="#636163"/>
<rect x="352.2" y="465.9" width="9.4" height="6.1" fill="#e7acb3"/>
<rect x="363" y="465" width="12" height="0.9" fill="#636163"/>
<rect x="363" y="465" width="1.2" height="8" fill="#636163"/>
<rect x="364.2" y="465.9" width="9.4" height="6.1" fill="#e7acce"/>
<rect x="375" y="465" width="12" height="0.9" fill="#636163"/>
<rect x="375" y="465" width="1.2" height="8" fill="#636163"/>
<rect x="376.2" y="465.9" width="9.4" height="6.1" fill="#e7acef"/>
<rect x="195" y="473" width="12" height="0.9" fill="#636163"/>
<rect x="195" y="473" width="1.2" height="8" fill="#636163"/>
<rect x="196.2" y="473.9" width="9.4" height="6.1" fill="#00e700"/>
<rect x="207" y="473" width="12" height="0.9" fill="#636163"/>
<rect x="207" y="473" width="1.2" height="8" fill="#636163"/>
<rect x="208.2" y="473.9" width="9.4" height="6.1" fill="#00e736"/>
<rect x="219" y="473" width="12" height="0.9" fill="#636163"/>
<rect x="219" y="473" width="1.2" height="8" fill="#636163"/>
<rect x="220.2" y="473.9" width="9.4" height="6.1" fill="#00e75a"/>
<rect x="231" y="473" width="12" height="0.9" fill="#636163"/>
<rect x="231" y="473" width="1.2" height="8" fill="#636163"/>
<rect x="232.2" y="473.9" width="9.4" height="6.1" fill="#00e77a"/>
<rect x="243" y="473" width="12" height="0.9" fill="#636163"/>
<rect x="243" y="473" width="1.2" height="8" fill="#636163"/>
<rect x="244.2" y="473.9" width="9.4" height="6.1" fill="#00e798"/>
<rect x="255" y="473" width="12" height="0.9" fill="#636163"/>
<rect x="255" y="473" width="1.2" height="8" fill="#636163"/>
<rect x="256.2" y="473.9" width="9.4" height="6.1" fill="#00e7b3"/>
<rect x="267" y="473" width="12" height="0.9" fill="#636163"/>
<rect x="267" y="473" width="1.2" height="8" fill="#636163"/>
<rect x="268.2" y="473.9" width="9.4" height="6.1" fill="#00e7ce"/>
<rect x="279" y="473" width="12" height="0.9" fill="#636163"/>
<rect x="279" y="473" width="1.2" height="8" fill="#636163"/>
<rect x="280.2" y="473.9" width="9.4" height="6.1" fill="#00e7ef"/>
<rect x="291" y="473" width="12" height="0.9" fill="#636163"/>
<rect x="291" y="473" width="1.2" height="8" fill="#636163"/>
<rect x="292.2" y="473.9" width="9.4" height="6.1" fill="#36e700"/>
<rect x="303" y="473" width="12" height="0.9" fill="#636163"/>
<rect x="303" y="473" width="1.2" height="8" fill="#636163"/>
<rect x="304.2" y="473.9" width="9.4" height="6.1" fill="#36e736"/>
<rect x="315" y="473" width="12" height="0.9" fill="#636163"/>
<rect x="315" y="473" width="1.2" height="8" fill="#636163"/>
<rect x="316.2" y="473.9" width="9.4" height="6.1" fill="#36e75a"/>
<rect x="327" y="473" width="12" height="0.9" fill="#636163"/>
<rect x="327" y="473" width="1.2" height="8" fill="#636163"/>
<rect x="328.2" y="473.9" width="9.4" height="6.1" fill="#36e77a"/>
<rect x="339" y="473" width="12" height="0.9" fill="#636163"/>
<rect x="339" y="473" width="1.2" height="8" fill="#636163"/>
<rect x="340.2" y="473.9" width="9.4" height="6.1" fill="#36e798"/>
<rect x="351" y="473" width="12" height="0.9" fill="#636163"/>
<rect x="351" y="473" width="1.2" height="8" fill="#636163"/>
<rect x="352.2" y="473.9" width="9.4" height="6.1" fill="#36e7b3"/>
<rect x="363" y="473" width="12" height="0.9" fill="#636163"/>
<rect x="363" y="473" width="1.2" height="8" fill="#636163"/>
<rect x="364.2" y="473.9" width="9.4" height="6.1" fill="#36e7ce"/>
<rect x="375" y="473" width="12" height="0.9" fill="#636163"/>
<rect x="375" y="473" width="1.2" height="8" fill="#636163"/>
<rect x="376.2" y="473.9" width="9.4" height="6.1" fill="#36e7ef"/>
<rect x="195" y="481" width="12" height="0.9" fill="#636163"/>
<rect x="195" y="481" width="1.2" height="8" fill="#636163"/>
<rect x="196.2" y="481.9" width="9.4" height="6.1" fill="#5ae700"/>
<rect x="207" y="481" width="12" height="0.9" fill="#636163"/>
<rect x="207" y="481" width="1.2" height="8" fill="#636163"/>
<rect x="208.2" y="481.9" width="9.4" height="6.1" fill="#5ae736"/>
<rect x="219" y="481" width="12" height="0.9" fill="#636163"/>
<rect x="219" y="481" width="1.2" height="8" fill="#636163"/>
<rect x="220.2" y="481.9" width="9.4" height="6.1" fill="#5ae75a"/>
<rect x="231" y="481" width="12" height="0.9" fill="#636163"/>
<rect x="231" y="481" width="1.2" height="8" fill="#636163"/>
<rect x="232.2" y="481.9" width="9.4" height="6.1" fill="#5ae77a"/>
<rect x="243" y="481" width="12" height="0.9" fill="#636163"/>
<rect x="243" y="481" width="1.2" height="8" fill="#636163"/>
<rect x="244.2" y="481.9" width="9.4" height="6.1" fill="#5ae798"/>
<rect x="255" y="481" width="12" height="0.9" fill="#636163"/>
<rect x="255" y="481" width="1.2" height="8" fill="#636163"/>
<rect x="256.2" y="481.9" width="9.4" height="6.1" fill="#5ae7b3"/>
<rect x="267" y="481" width="12" height="0.9" fill="#636163"/>
<rect x="267" y="481" width="1.2" height="8" fill="#636163"/>
<rect x="268.2" y="481.9" width="9.4" height="6.1" fill="#5ae7ce"/>
<rect x="279" y="481" width="12" height="0.9" fill="#636163"/>
<rect x="279" y="481" width="1.2" height="8" fill="#636163"/>
<rect x="280.2" y="481.9" width="9.4" height="6.1" fill="#5ae7ef"/>
<rect x="291" y="481" width="12" height="0.9" fill="#636163"/>
<rect x="291" y="481" width="1.2" height="8" fill="#636163"/>
<rect x="292.2" y="481.9" width="9.4" height="6.1" fill="#7ae700"/>
<rect x="303" y="481" width="12" height="0.9" fill="#636163"/>
<rect x="303" y="481" width="1.2" height="8" fill="#636163"/>
<rect x="304.2" y="481.9" width="9.4" height="6.1" fill="#7ae736"/>
<rect x="315" y="481" width="12" height="0.9" fill="#636163"/>
<rect x="315" y="481" width="1.2" height="8" fill="#636163"/>
<rect x="316.2" y="481.9" width="9.4" height="6.1" fill="#7ae75a"/>
<rect x="327" y="481" width="12" height="0.9" fill="#636163"/>
<rect x="327" y="481" width="1.2" height="8" fill="#636163"/>
<rect x="328.2" y="481.9" width="9.4" height="6.1" fill="#7ae77a"/>
<rect x="339" y="481" width="12" height="0.9" fill="#636163"/>
<rect x="339" y="481" width="1.2" height="8" fill="#636163"/>
<rect x="340.2" y="481.9" width="9.4" height="6.1" fill="#7ae798"/>
<rect x="351" y="481" width="12" height="0.9" fill="#636163"/>
<rect x="351" y="481" width="1.2" height="8" fill="#636163"/>
<rect x="352.2" y="481.9" width="9.4" height="6.1" fill="#7ae7b3"/>
<rect x="363" y="481" width="12" height="0.9" fill="#636163"/>
<rect x="363" y="481" width="1.2" height="8" fill="#636163"/>
<rect x="364.2" y="481.9" width="9.4" height="6.1" fill="#7ae7ce"/>
<rect x="375" y="481" width="12" height="0.9" fill="#636163"/>
<rect x="375" y="481" width="1.2" height="8" fill="#636163"/>
<rect x="376.2" y="481.9" width="9.4" height="6.1" fill="#7ae7ef"/>
<rect x="195" y="489" width="12" height="0.9" fill="#636163"/>
<rect x="195" y="489" width="1.2" height="8" fill="#636163"/>
<rect x="196.2" y="489.9" width="9.4" height="6.1" fill="#98e700"/>
<rect x="207" y="489" width="12" height="0.9" fill="#636163"/>
<rect x="207" y="489" width="1.2" height="8" fill="#636163"/>
<rect x="208.2" y="489.9" width="9.4" height="6.1" fill="#98e736"/>
<rect x="219" y="489" width="12" height="0.9" fill="#636163"/>
<rect x="219" y="489" width="1.2" height="8" fill="#636163"/>
<rect x="220.2" y="489.9" width="9.4" height="6.1" fill="#98e75a"/>
<rect x="231" y="489" width="12" height="0.9" fill="#636163"/>
<rect x="231" y="489" width="1.2" height="8" fill="#636163"/>
<rect x="232.2" y="489.9" width="9.4" height="6.1" fill="#98e77a"/>
<rect x="243" y="489" width="12" height="0.9" fill="#636163"/>
<rect x="243" y="489" width="1.2" height="8" fill="#636163"/>
<rect x="244.2" y="489.9" width="9.4" height="6.1" fill="#98e798"/>
<rect x="255" y="489" width="12" height="0.9" fill="#636163"/>
<rect x="255" y="489" width="1.2" height="8" fill="#636163"/>
<rect x="256.2" y="489.9" width="9.4" height="6.1" fill="#98e7b3"/>
<rect x="267" y="489" width="12" height="0.9" fill="#636163"/>
<rect x="267" y="489" width="1.2" height="8" fill="#636163"/>
<rect x="268.2" y="489.9" width="9.4" height="6.1" fill="#98e7ce"/>
<rect x="279" y="489" width="12" height="0.9" fill="#636163"/>
<rect x="279" y="489" width="1.2" height="8" fill="#636163"/>
<rect x="280.2" y="489.9" width="9.4" height="6.1" fill="#98e7ef"/>
<rect x="291" y="489" width="12" height="0.9" fill="#636163"/>
<rect x="291" y="489" width="1.2" height="8" fill="#636163"/>
<rect x="292.2" y="489.9" width="9.4" height="6.1" fill="#b3e700"/>
<rect x="303" y="489" width="12" height="0.9" fill="#636163"/>
<rect x="303" y="489" width="1.2" height="8" fill="#636163"/>
<rect x="304.2" y="489.9" width="9.4" height="6.1" fill="#b3e736"/>
<rect x="315" y="489" width="12" height="0.9" fill="#636163"/>
<rect x="315" y="489" width="1.2" height="8" fill="#636163"/>
<rect x="316.2" y="489.9" width="9.4" height="6.1" fill="#b3e75a"/>
<rect x="327" y="489" width="12" height="0.9" fill="#636163"/>
<rect x="327" y="489" width="1.2" height="8" fill="#636163"/>
<rect x="328.2" y="489.9" width="9.4" height="6.1" fill="#b3e77a"/>
<rect x="339" y="489" width="12" height="0.9" fill="#636163"/>
<rect x="339" y="489" width="1.2" height="8" fill="#636163"/>
<rect x="340.2" y="489.9" width="9.4" height="6.1" fill="#b3e798"/>
<rect x="351" y="489" width="12" height="0.9" fill="#636163"/>
<rect x="351" y="489" width="1.2" height="8" fill="#636163"/>
<rect x="352.2" y="489.9" width="9.4" height="6.1" fill="#b3e7b3"/>
<rect x="363" y="489" width="12" height="0.9" fill="#636163"/>
<rect x="363" y="489" width="1.2" height="8" fill="#636163"/>
<rect x="364.2" y="489.9" width="9.4" height="6.1" fill="#b3e7ce"/>
<rect x="375" y="489" width="12" height="0.9" fill="#636163"/>
<rect x="375" y="489" width="1.2" height="8" fill="#636163"/>
<rect x="376.2" y="489.9" width="9.4" height="6.1" fill="#b3e7ef"/>
<rect x="195" y="497" width="12" height="0.9" fill="#636163"/>
<rect x="195" y="497" width="1.2" height="8" fill="#636163"/>
<rect x="196.2" y="497.9" width="9.4" height="6.1" fill="#cee700"/>
<rect x="207" y="497" width="12" height="0.9" fill="#636163"/>
<rect x="207" y="497" width="1.2" height="8" fill="#636163"/>
<rect x="208.2" y="497.9" width="9.4" height="6.1" fill="#cee736"/>
<rect x="219" y="497" width="12" height="0.9" fill="#636163"/>
<rect x="219" y="497" width="1.2" height="8" fill="#636163"/>
<rect x="220.2" y="497.9" width="9.4" height="6.1" fill="#cee75a"/>
<rect x="231" y="497" width="12" height="0.9" fill="#636163"/>
<rect x="231" y="497" width="1.2" height="8" fill="#636163"/>
<rect x="232.2" y="497.9" width="9.4" height="6.1" fill="#cee77a"/>
<rect x="243" y="497" width="12" height="0.9" fill="#636163"/>
<rect x="243" y="497" width="1.2" height="8" fill="#636163"/>
<rect x="244.2" y="497.9" width="9.4" height="6.1" fill="#cee798"/>
<rect x="255" y="497" width="12" height="0.9" fill="#636163"/>
<rect x="255" y="497" width="1.2" height="8" fill="#636163"/>
<rect x="256.2" y="497.9" width="9.4" height="6.1" fill="#cee7b3"/>
<rect x="267" y="497" width="12" height="0.9" fill="#636163"/>
<rect x="267" y="497" width="1.2" height="8" fill="#636163"/>
<rect x="268.2" y="497.9" width="9.4" height="6.1" fill="#cee7ce"/>
<rect x="279" y="497" width="12" height="0.9" fill="#636163"/>
<rect x="279" y="497" width="1.2" height="8" fill="#636163"/>
<rect x="280.2" y="497.9" width="9.4" height="6.1" fill="#cee7ef"/>
<rect x="291" y="497" width="12" height="0.9" fill="#636163"/>
<rect x="291" y="497" width="1.2" height="8" fill="#636163"/>
<rect x="292.2" y="497.9" width="9.4" height="6.1" fill="#e7e700"/>
<rect x="303" y="497" width="12" height="0.9" fill="#636163"/>
<rect x="303" y="497" width="1.2" height="8" fill="#636163"/>
<rect x="304.2" y="497.9" width="9.4" height="6.1" fill="#e7e736"/>
<rect x="315" y="497" width="12" height="0.9" fill="#636163"/>
<rect x="315" y="497" width="1.2" height="8" fill="#636163"/>
<rect x="316.2" y="497.9" width="9.4" height="6.1" fill="#e7e75a"/>
<rect x="327" y="497" width="12" height="0.9" fill="#636163"/>
<rect x="327" y="497" width="1.2" height="8" fill="#636163"/>
<rect x="328.2" y="497.9" width="9.4" height="6.1" fill="#e7e77a"/>
<rect x="339" y="497" width="12" height="0.9" fill="#636163"/>
<rect x="339" y="497" width="1.2" height="8" fill="#636163"/>
<rect x="340.2" y="497.9" width="9.4" height="6.1" fill="#e7e798"/>
<rect x="351" y="497" width="12" height="0.9" fill="#636163"/>
<rect x="351" y="497" width="1.2" height="8" fill="#636163"/>
<rect x="352.2" y="497.9" width="9.4" height="6.1" fill="#e7e7b3"/>
<rect x="363" y="497" width="12" height="0.9" fill="#636163"/>
<rect x="363" y="497" width="1.2" height="8" fill="#636163"/>
<rect x="364.2" y="497.9" width="9.4" height="6.1" fill="#e7e7ce"/>
<rect x="375" y="497" width="12" height="0.9" fill="#636163"/>
<rect x="375" y="497" width="1.2" height="8" fill="#636163"/>
<rect x="376.2" y="497.9" width="9.4" height="6.1" fill="#e7e7ef"/>
<rect x="195" y="495.2" width="192" height="11.4" fill="#d6d3ef"/>
<rect x="197.2" y="498.9" width="9.2" height="6" fill="#313031"/>
<rect x="196.1" y="497.9" width="9" height="6" fill="#cee700"/>
<rect x="209.2" y="498.9" width="9.2" height="6" fill="#313031"/>
<rect x="208.1" y="497.9" width="9" height="6" fill="#cee736"/>
<rect x="221.2" y="498.9" width="9.2" height="6" fill="#313031"/>
<rect x="220.1" y="497.9" width="9" height="6" fill="#cee75a"/>
<rect x="233.2" y="498.9" width="9.2" height="6" fill="#313031"/>
<rect x="232.1" y="497.9" width="9" height="6" fill="#cee77a"/>
<rect x="245.2" y="498.9" width="9.2" height="6" fill="#313031"/>
<rect x="244.1" y="497.9" width="9" height="6" fill="#cee798"/>
<rect x="257.2" y="498.9" width="9.2" height="6" fill="#313031"/>
<rect x="256.1" y="497.9" width="9" height="6" fill="#cee7b3"/>
<rect x="269.2" y="498.9" width="9.2" height="6" fill="#313031"/>
<rect x="268.1" y="497.9" width="9" height="6" fill="#cee7ce"/>
<rect x="281.2" y="498.9" width="9.2" height="6" fill="#313031"/>
<rect x="280.1" y="497.9" width="9" height="6" fill="#cee7ef"/>
<rect x="293.2" y="498.9" width="9.2" height="6" fill="#313031"/>
<rect x="292.1" y="497.9" width="9" height="6" fill="#e7e700"/>
<rect x="305.2" y="498.9" width="9.2" height="6" fill="#313031"/>
<rect x="304.1" y="497.9" width="9" height="6" fill="#e7e736"/>
<rect x="317.2" y="498.9" width="9.2" height="6" fill="#313031"/>
<rect x="316.1" y="497.9" width="9" height="6" fill="#e7e75a"/>
<rect x="329.2" y="498.9" width="9.2" height="6" fill="#313031"/>
<rect x="328.1" y="497.9" width="9" height="6" fill="#e7e77a"/>
<rect x="341.2" y="498.9" width="9.2" height="6" fill="#313031"/>
<rect x="340.1" y="497.9" width="9" height="6" fill="#e7e798"/>
<rect x="353.2" y="498.9" width="9.2" height="6" fill="#313031"/>
<rect x="352.1" y="497.9" width="9" height="6" fill="#e7e7b3"/>
<rect x="365.2" y="498.9" width="9.2" height="6" fill="#313031"/>
<rect x="364.1" y="497.9" width="9" height="6" fill="#e7e7ce"/>
<rect x="377.2" y="498.9" width="9.2" height="6" fill="#313031"/>
<rect x="376.1" y="497.9" width="9" height="6" fill="#e7e7ef"/>
<rect x="195" y="506.6" width="36" height="34.4" fill="#7b797b"/>
<rect x="195" y="506.6" width="3" height="34" fill="#adaaad"/>
<rect x="198" y="506.8" width="30" height="32" fill="#e7e7e7"/>
<rect x="228" y="506.6" width="3" height="34.4" fill="#424142"/>
<rect x="196" y="538.8" width="35" height="2.2" fill="#424142"/>
<rect x="231" y="506.6" width="156" height="46.4" fill="#525052"/>
<rect x="231.2" y="507.2" width="1.3" height="8.9" fill="#adaaad"/>
<rect x="232.5" y="507.2" width="8.8" height="8.9" fill="#ef0000"/>
<rect x="241.3" y="507.2" width="1.7" height="8.9" fill="#424142"/>
<rect x="243" y="507.2" width="139.4" height="8.9" fill="#ef0000"/>
<rect x="245.8" y="507.2" width="2.1" height="2.7" fill="#6b0000"/>
<rect x="245.8" y="513.2" width="2.1" height="2.9" fill="#6b0000"/>
<rect x="250.3" y="507.2" width="2.1" height="2.7" fill="#6b0000"/>
<rect x="250.3" y="513.2" width="2.1" height="2.9" fill="#6b0000"/>
<rect x="254.8" y="507.2" width="2.1" height="2.7" fill="#6b0000"/>
<rect x="254.8" y="513.2" width="2.1" height="2.9" fill="#6b0000"/>
<rect x="259.3" y="507.2" width="2.1" height="2.7" fill="#6b0000"/>
<rect x="259.3" y="513.2" width="2.1" height="2.9" fill="#6b0000"/>
<rect x="263.8" y="507.2" width="2.1" height="2.7" fill="#6b0000"/>
<rect x="263.8" y="513.2" width="2.1" height="2.9" fill="#6b0000"/>
<rect x="268.3" y="507.2" width="2.1" height="2.7" fill="#6b0000"/>
<rect x="268.3" y="513.2" width="2.1" height="2.9" fill="#6b0000"/>
<rect x="272.8" y="507.2" width="2.1" height="2.7" fill="#6b0000"/>
<rect x="272.8" y="513.2" width="2.1" height="2.9" fill="#6b0000"/>
<rect x="277.3" y="507.2" width="2.1" height="2.7" fill="#6b0000"/>
<rect x="277.3" y="513.2" width="2.1" height="2.9" fill="#6b0000"/>
<rect x="281.8" y="507.2" width="2.1" height="2.7" fill="#6b0000"/>
<rect x="281.8" y="513.2" width="2.1" height="2.9" fill="#6b0000"/>
<rect x="286.3" y="507.2" width="2.1" height="2.7" fill="#6b0000"/>
<rect x="286.3" y="513.2" width="2.1" height="2.9" fill="#6b0000"/>
<rect x="290.8" y="507.2" width="2.1" height="2.7" fill="#6b0000"/>
<rect x="290.8" y="513.2" width="2.1" height="2.9" fill="#6b0000"/>
<rect x="295.3" y="507.2" width="2.1" height="2.7" fill="#6b0000"/>
<rect x="295.3" y="513.2" width="2.1" height="2.9" fill="#6b0000"/>
<rect x="299.8" y="507.2" width="2.1" height="2.7" fill="#6b0000"/>
<rect x="299.8" y="513.2" width="2.1" height="2.9" fill="#6b0000"/>
<rect x="304.3" y="507.2" width="2.1" height="2.7" fill="#6b0000"/>
<rect x="304.3" y="513.2" width="2.1" height="2.9" fill="#6b0000"/>
<rect x="308.8" y="507.2" width="2.1" height="2.7" fill="#6b0000"/>
<rect x="308.8" y="513.2" width="2.1" height="2.9" fill="#6b0000"/>
<rect x="313.3" y="507.2" width="2.1" height="2.7" fill="#6b0000"/>
<rect x="313.3" y="513.2" width="2.1" height="2.9" fill="#6b0000"/>
<rect x="317.8" y="507.2" width="2.1" height="2.7" fill="#6b0000"/>
<rect x="317.8" y="513.2" width="2.1" height="2.9" fill="#6b0000"/>
<rect x="322.3" y="507.2" width="2.1" height="2.7" fill="#6b0000"/>
<rect x="322.3" y="513.2" width="2.1" height="2.9" fill="#6b0000"/>
<rect x="326.8" y="507.2" width="2.1" height="2.7" fill="#6b0000"/>
<rect x="326.8" y="513.2" width="2.1" height="2.9" fill="#6b0000"/>
<rect x="331.3" y="507.2" width="2.1" height="2.7" fill="#6b0000"/>
<rect x="331.3" y="513.2" width="2.1" height="2.9" fill="#6b0000"/>
<rect x="335.8" y="507.2" width="2.1" height="2.7" fill="#6b0000"/>
<rect x="335.8" y="513.2" width="2.1" height="2.9" fill="#6b0000"/>
<rect x="340.3" y="507.2" width="2.1" height="2.7" fill="#6b0000"/>
<rect x="340.3" y="513.2" width="2.1" height="2.9" fill="#6b0000"/>
<rect x="344.8" y="507.2" width="2.1" height="2.7" fill="#6b0000"/>
<rect x="344.8" y="513.2" width="2.1" height="2.9" fill="#6b0000"/>
<rect x="349.3" y="507.2" width="2.1" height="2.7" fill="#6b0000"/>
<rect x="349.3" y="513.2" width="2.1" height="2.9" fill="#6b0000"/>
<rect x="353.8" y="507.2" width="2.1" height="2.7" fill="#6b0000"/>
<rect x="353.8" y="513.2" width="2.1" height="2.9" fill="#6b0000"/>
<rect x="358.3" y="507.2" width="2.1" height="2.7" fill="#6b0000"/>
<rect x="358.3" y="513.2" width="2.1" height="2.9" fill="#6b0000"/>
<rect x="362.8" y="507.2" width="2.1" height="2.7" fill="#6b0000"/>
<rect x="362.8" y="513.2" width="2.1" height="2.9" fill="#6b0000"/>
<rect x="367.3" y="507.2" width="2.1" height="2.7" fill="#6b0000"/>
<rect x="367.3" y="513.2" width="2.1" height="2.9" fill="#6b0000"/>
<rect x="371.8" y="507.2" width="2.1" height="2.7" fill="#6b0000"/>
<rect x="371.8" y="513.2" width="2.1" height="2.9" fill="#6b0000"/>
<rect x="376.3" y="507.2" width="2.1" height="2.7" fill="#6b0000"/>
<rect x="376.3" y="513.2" width="2.1" height="2.9" fill="#6b0000"/>
<rect x="380.8" y="507.2" width="2.1" height="2.7" fill="#6b0000"/>
<rect x="380.8" y="513.2" width="2.1" height="2.9" fill="#6b0000"/>
<rect x="231" y="516.1" width="156" height="1" fill="#adaaad"/>
<rect x="231.2" y="518.1" width="1.3" height="9.7" fill="#adaaad"/>
<rect x="232.5" y="518.1" width="8.8" height="9.7" fill="#00e700"/>
<rect x="241.3" y="518.1" width="1.7" height="9.7" fill="#424142"/>
<rect x="243" y="518.1" width="139.4" height="9.7" fill="#00e700"/>
<rect x="245.8" y="518.1" width="2.1" height="2.7" fill="#006100"/>
<rect x="245.8" y="524.9" width="2.1" height="2.9" fill="#006100"/>
<rect x="250.3" y="518.1" width="2.1" height="2.7" fill="#006100"/>
<rect x="250.3" y="524.9" width="2.1" height="2.9" fill="#006100"/>
<rect x="254.8" y="518.1" width="2.1" height="2.7" fill="#006100"/>
<rect x="254.8" y="524.9" width="2.1" height="2.9" fill="#006100"/>
<rect x="259.3" y="518.1" width="2.1" height="2.7" fill="#006100"/>
<rect x="259.3" y="524.9" width="2.1" height="2.9" fill="#006100"/>
<rect x="263.8" y="518.1" width="2.1" height="2.7" fill="#006100"/>
<rect x="263.8" y="524.9" width="2.1" height="2.9" fill="#006100"/>
<rect x="268.3" y="518.1" width="2.1" height="2.7" fill="#006100"/>
<rect x="268.3" y="524.9" width="2.1" height="2.9" fill="#006100"/>
<rect x="272.8" y="518.1" width="2.1" height="2.7" fill="#006100"/>
<rect x="272.8" y="524.9" width="2.1" height="2.9" fill="#006100"/>
<rect x="277.3" y="518.1" width="2.1" height="2.7" fill="#006100"/>
<rect x="277.3" y="524.9" width="2.1" height="2.9" fill="#006100"/>
<rect x="281.8" y="518.1" width="2.1" height="2.7" fill="#006100"/>
<rect x="281.8" y="524.9" width="2.1" height="2.9" fill="#006100"/>
<rect x="286.3" y="518.1" width="2.1" height="2.7" fill="#006100"/>
<rect x="286.3" y="524.9" width="2.1" height="2.9" fill="#006100"/>
<rect x="290.8" y="518.1" width="2.1" height="2.7" fill="#006100"/>
<rect x="290.8" y="524.9" width="2.1" height="2.9" fill="#006100"/>
<rect x="295.3" y="518.1" width="2.1" height="2.7" fill="#006100"/>
<rect x="295.3" y="524.9" width="2.1" height="2.9" fill="#006100"/>
<rect x="299.8" y="518.1" width="2.1" height="2.7" fill="#006100"/>
<rect x="299.8" y="524.9" width="2.1" height="2.9" fill="#006100"/>
<rect x="304.3" y="518.1" width="2.1" height="2.7" fill="#006100"/>
<rect x="304.3" y="524.9" width="2.1" height="2.9" fill="#006100"/>
<rect x="308.8" y="518.1" width="2.1" height="2.7" fill="#006100"/>
<rect x="308.8" y="524.9" width="2.1" height="2.9" fill="#006100"/>
<rect x="313.3" y="518.1" width="2.1" height="2.7" fill="#006100"/>
<rect x="313.3" y="524.9" width="2.1" height="2.9" fill="#006100"/>
<rect x="317.8" y="518.1" width="2.1" height="2.7" fill="#006100"/>
<rect x="317.8" y="524.9" width="2.1" height="2.9" fill="#006100"/>
<rect x="322.3" y="518.1" width="2.1" height="2.7" fill="#006100"/>
<rect x="322.3" y="524.9" width="2.1" height="2.9" fill="#006100"/>
<rect x="326.8" y="518.1" width="2.1" height="2.7" fill="#006100"/>
<rect x="326.8" y="524.9" width="2.1" height="2.9" fill="#006100"/>
<rect x="331.3" y="518.1" width="2.1" height="2.7" fill="#006100"/>
<rect x="331.3" y="524.9" width="2.1" height="2.9" fill="#006100"/>
<rect x="335.8" y="518.1" width="2.1" height="2.7" fill="#006100"/>
<rect x="335.8" y="524.9" width="2.1" height="2.9" fill="#006100"/>
<rect x="340.3" y="518.1" width="2.1" height="2.7" fill="#006100"/>
<rect x="340.3" y="524.9" width="2.1" height="2.9" fill="#006100"/>
<rect x="344.8" y="518.1" width="2.1" height="2.7" fill="#006100"/>
<rect x="344.8" y="524.9" width="2.1" height="2.9" fill="#006100"/>
<rect x="349.3" y="518.1" width="2.1" height="2.7" fill="#006100"/>
<rect x="349.3" y="524.9" width="2.1" height="2.9" fill="#006100"/>
<rect x="353.8" y="518.1" width="2.1" height="2.7" fill="#006100"/>
<rect x="353.8" y="524.9" width="2.1" height="2.9" fill="#006100"/>
<rect x="358.3" y="518.1" width="2.1" height="2.7" fill="#006100"/>
<rect x="358.3" y="524.9" width="2.1" height="2.9" fill="#006100"/>
<rect x="362.8" y="518.1" width="2.1" height="2.7" fill="#006100"/>
<rect x="362.8" y="524.9" width="2.1" height="2.9" fill="#006100"/>
<rect x="367.3" y="518.1" width="2.1" height="2.7" fill="#006100"/>
<rect x="367.3" y="524.9" width="2.1" height="2.9" fill="#006100"/>
<rect x="371.8" y="518.1" width="2.1" height="2.7" fill="#006100"/>
<rect x="371.8" y="524.9" width="2.1" height="2.9" fill="#006100"/>
<rect x="376.3" y="518.1" width="2.1" height="2.7" fill="#006100"/>
<rect x="376.3" y="524.9" width="2.1" height="2.9" fill="#006100"/>
<rect x="380.8" y="518.1" width="2.1" height="2.7" fill="#006100"/>
<rect x="380.8" y="524.9" width="2.1" height="2.9" fill="#006100"/>
<rect x="231" y="527.8" width="156" height="1" fill="#adaaad"/>
<rect x="231.2" y="530.1" width="1.3" height="9.9" fill="#adaaad"/>
<rect x="232.5" y="530.1" width="8.8" height="9.9" fill="#0000ef"/>
<rect x="241.3" y="530.1" width="1.7" height="9.9" fill="#424142"/>
<rect x="243" y="530.1" width="139.4" height="9.9" fill="#0000ef"/>
<rect x="245.8" y="530.1" width="2.1" height="2.7" fill="#00006b"/>
<rect x="245.8" y="537.1" width="2.1" height="2.9" fill="#00006b"/>
<rect x="250.3" y="530.1" width="2.1" height="2.7" fill="#00006b"/>
<rect x="250.3" y="537.1" width="2.1" height="2.9" fill="#00006b"/>
<rect x="254.8" y="530.1" width="2.1" height="2.7" fill="#00006b"/>
<rect x="254.8" y="537.1" width="2.1" height="2.9" fill="#00006b"/>
<rect x="259.3" y="530.1" width="2.1" height="2.7" fill="#00006b"/>
<rect x="259.3" y="537.1" width="2.1" height="2.9" fill="#00006b"/>
<rect x="263.8" y="530.1" width="2.1" height="2.7" fill="#00006b"/>
<rect x="263.8" y="537.1" width="2.1" height="2.9" fill="#00006b"/>
<rect x="268.3" y="530.1" width="2.1" height="2.7" fill="#00006b"/>
<rect x="268.3" y="537.1" width="2.1" height="2.9" fill="#00006b"/>
<rect x="272.8" y="530.1" width="2.1" height="2.7" fill="#00006b"/>
<rect x="272.8" y="537.1" width="2.1" height="2.9" fill="#00006b"/>
<rect x="277.3" y="530.1" width="2.1" height="2.7" fill="#00006b"/>
<rect x="277.3" y="537.1" width="2.1" height="2.9" fill="#00006b"/>
<rect x="281.8" y="530.1" width="2.1" height="2.7" fill="#00006b"/>
<rect x="281.8" y="537.1" width="2.1" height="2.9" fill="#00006b"/>
<rect x="286.3" y="530.1" width="2.1" height="2.7" fill="#00006b"/>
<rect x="286.3" y="537.1" width="2.1" height="2.9" fill="#00006b"/>
<rect x="290.8" y="530.1" width="2.1" height="2.7" fill="#00006b"/>
<rect x="290.8" y="537.1" width="2.1" height="2.9" fill="#00006b"/>
<rect x="295.3" y="530.1" width="2.1" height="2.7" fill="#00006b"/>
<rect x="295.3" y="537.1" width="2.1" height="2.9" fill="#00006b"/>
<rect x="299.8" y="530.1" width="2.1" height="2.7" fill="#00006b"/>
<rect x="299.8" y="537.1" width="2.1" height="2.9" fill="#00006b"/>
<rect x="304.3" y="530.1" width="2.1" height="2.7" fill="#00006b"/>
<rect x="304.3" y="537.1" width="2.1" height="2.9" fill="#00006b"/>
<rect x="308.8" y="530.1" width="2.1" height="2.7" fill="#00006b"/>
<rect x="308.8" y="537.1" width="2.1" height="2.9" fill="#00006b"/>
<rect x="313.3" y="530.1" width="2.1" height="2.7" fill="#00006b"/>
<rect x="313.3" y="537.1" width="2.1" height="2.9" fill="#00006b"/>
<rect x="317.8" y="530.1" width="2.1" height="2.7" fill="#00006b"/>
<rect x="317.8" y="537.1" width="2.1" height="2.9" fill="#00006b"/>
<rect x="322.3" y="530.1" width="2.1" height="2.7" fill="#00006b"/>
<rect x="322.3" y="537.1" width="2.1" height="2.9" fill="#00006b"/>
<rect x="326.8" y="530.1" width="2.1" height="2.7" fill="#00006b"/>
<rect x="326.8" y="537.1" width="2.1" height="2.9" fill="#00006b"/>
<rect x="331.3" y="530.1" width="2.1" height="2.7" fill="#00006b"/>
<rect x="331.3" y="537.1" width="2.1" height="2.9" fill="#00006b"/>
<rect x="335.8" y="530.1" width="2.1" height="2.7" fill="#00006b"/>
<rect x="335.8" y="537.1" width="2.1" height="2.9" fill="#00006b"/>
<rect x="340.3" y="530.1" width="2.1" height="2.7" fill="#00006b"/>
<rect x="340.3" y="537.1" width="2.1" height="2.9" fill="#00006b"/>
<rect x="344.8" y="530.1" width="2.1" height="2.7" fill="#00006b"/>
<rect x="344.8" y="537.1" width="2.1" height="2.9" fill="#00006b"/>
<rect x="349.3" y="530.1" width="2.1" height="2.7" fill="#00006b"/>
<rect x="349.3" y="537.1" width="2.1" height="2.9" fill="#00006b"/>
<rect x="353.8" y="530.1" width="2.1" height="2.7" fill="#00006b"/>
<rect x="353.8" y="537.1" width="2.1" height="2.9" fill="#00006b"/>
<rect x="358.3" y="530.1" width="2.1" height="2.7" fill="#00006b"/>
<rect x="358.3" y="537.1" width="2.1" height="2.9" fill="#00006b"/>
<rect x="362.8" y="530.1" width="2.1" height="2.7" fill="#00006b"/>
<rect x="362.8" y="537.1" width="2.1" height="2.9" fill="#00006b"/>
<rect x="367.3" y="530.1" width="2.1" height="2.7" fill="#00006b"/>
<rect x="367.3" y="537.1" width="2.1" height="2.9" fill="#00006b"/>
<rect x="371.8" y="530.1" width="2.1" height="2.7" fill="#00006b"/>
<rect x="371.8" y="537.1" width="2.1" height="2.9" fill="#00006b"/>
<rect x="376.3" y="530.1" width="2.1" height="2.7" fill="#00006b"/>
<rect x="376.3" y="537.1" width="2.1" height="2.9" fill="#00006b"/>
<rect x="380.8" y="530.1" width="2.1" height="2.7" fill="#00006b"/>
<rect x="380.8" y="537.1" width="2.1" height="2.9" fill="#00006b"/>
<rect x="231" y="540" width="156" height="1" fill="#adaaad"/>
<rect x="382.4" y="506.6" width="1.4" height="34.4" fill="#adaaad"/>
<rect x="383.8" y="506.6" width="3.2" height="34.4" fill="#313031"/>
<rect x="195" y="541" width="192" height="12" fill="#7b797b"/>
<rect x="195" y="541" width="192" height="1" fill="#adaaad"/>
<rect x="198" y="542.7" width="30" height="9" fill="#000"/>
<text class="ls" x="198.4" y="551" font-size="10.61" fill="#e7e300" font-weight="bold" textLength="29.4" lengthAdjust="spacingAndGlyphs">QUICK</text>
<rect x="228.5" y="541" width="2.5" height="12" fill="#424142"/>
<rect x="231.2" y="541.8" width="1.3" height="10.4" fill="#adaaad"/>
<rect x="232.5" y="541.8" width="8.8" height="10.4" fill="#7b797b"/>
<rect x="241.3" y="541.8" width="1.7" height="10.4" fill="#424142"/>
<rect x="243" y="541.8" width="48.2" height="10.4" fill="#7b797b"/>
<rect x="245.8" y="541.8" width="2.1" height="2.7" fill="#4a494a"/>
<rect x="245.8" y="549.3" width="2.1" height="2.9" fill="#4a494a"/>
<rect x="250.3" y="541.8" width="2.1" height="2.7" fill="#4a494a"/>
<rect x="250.3" y="549.3" width="2.1" height="2.9" fill="#4a494a"/>
<rect x="254.8" y="541.8" width="2.1" height="2.7" fill="#4a494a"/>
<rect x="254.8" y="549.3" width="2.1" height="2.9" fill="#4a494a"/>
<rect x="259.3" y="541.8" width="2.1" height="2.7" fill="#4a494a"/>
<rect x="259.3" y="549.3" width="2.1" height="2.9" fill="#4a494a"/>
<rect x="263.8" y="541.8" width="2.1" height="2.7" fill="#4a494a"/>
<rect x="263.8" y="549.3" width="2.1" height="2.9" fill="#4a494a"/>
<rect x="268.3" y="541.8" width="2.1" height="2.7" fill="#4a494a"/>
<rect x="268.3" y="549.3" width="2.1" height="2.9" fill="#4a494a"/>
<rect x="272.8" y="541.8" width="2.1" height="2.7" fill="#4a494a"/>
<rect x="272.8" y="549.3" width="2.1" height="2.9" fill="#4a494a"/>
<rect x="277.3" y="541.8" width="2.1" height="2.7" fill="#4a494a"/>
<rect x="277.3" y="549.3" width="2.1" height="2.9" fill="#4a494a"/>
<rect x="281.8" y="541.8" width="2.1" height="2.7" fill="#4a494a"/>
<rect x="281.8" y="549.3" width="2.1" height="2.9" fill="#4a494a"/>
<rect x="286.3" y="541.8" width="2.1" height="2.7" fill="#4a494a"/>
<rect x="286.3" y="549.3" width="2.1" height="2.9" fill="#4a494a"/>
<rect x="231" y="552.2" width="156" height="1" fill="#adaaad"/>
<rect x="291.2" y="541.8" width="1.3" height="10.4" fill="#c6c3c6"/>
<rect x="292.5" y="541.8" width="46.5" height="10.4" fill="#000"/>
<rect x="295.5" y="541.8" width="1.6" height="2.4" fill="#393839"/>
<rect x="295.5" y="549.6" width="1.6" height="2.6" fill="#393839"/>
<rect x="300" y="541.8" width="1.6" height="2.4" fill="#393839"/>
<rect x="300" y="549.6" width="1.6" height="2.6" fill="#393839"/>
<rect x="304.5" y="541.8" width="1.6" height="2.4" fill="#393839"/>
<rect x="304.5" y="549.6" width="1.6" height="2.6" fill="#393839"/>
<rect x="309" y="541.8" width="1.6" height="2.4" fill="#393839"/>
<rect x="309" y="549.6" width="1.6" height="2.6" fill="#393839"/>
<rect x="313.5" y="541.8" width="1.6" height="2.4" fill="#393839"/>
<rect x="313.5" y="549.6" width="1.6" height="2.6" fill="#393839"/>
<rect x="318" y="541.8" width="1.6" height="2.4" fill="#393839"/>
<rect x="318" y="549.6" width="1.6" height="2.6" fill="#393839"/>
<rect x="322.5" y="541.8" width="1.6" height="2.4" fill="#393839"/>
<rect x="322.5" y="549.6" width="1.6" height="2.6" fill="#393839"/>
<rect x="327" y="541.8" width="1.6" height="2.4" fill="#393839"/>
<rect x="327" y="549.6" width="1.6" height="2.6" fill="#393839"/>
<rect x="331.5" y="541.8" width="1.6" height="2.4" fill="#393839"/>
<rect x="331.5" y="549.6" width="1.6" height="2.6" fill="#393839"/>
<rect x="336" y="541.8" width="1.6" height="2.4" fill="#393839"/>
<rect x="336" y="549.6" width="1.6" height="2.6" fill="#393839"/>
<rect x="339" y="541.8" width="48" height="10.4" fill="#424142"/>
<rect x="231" y="552.2" width="156" height="0.8" fill="#313031"/>
<rect x="384.2" y="295" width="10" height="1.2" fill="#00008c"/>
<rect x="384.2" y="295" width="1.6" height="7" fill="#00008c"/>
<rect x="385.7" y="296" width="8.5" height="1.2" fill="#e7e7ff"/>
<rect x="385.7" y="296" width="1.6" height="6" fill="#e7e7ff"/>
<rect x="476.2" y="295" width="10" height="1.2" fill="#00008c"/>
<rect x="484.6" y="295" width="1.6" height="7" fill="#00008c"/>
<rect x="476.2" y="296" width="8.5" height="1.2" fill="#e7e7ff"/>
<rect x="483.1" y="296" width="1.6" height="6" fill="#e7e7ff"/>
<rect x="384.2" y="361.4" width="10" height="1.2" fill="#00008c"/>
<rect x="384.2" y="355.6" width="1.6" height="7" fill="#00008c"/>
<rect x="385.7" y="360.4" width="8.5" height="1.2" fill="#e7e7ff"/>
<rect x="385.7" y="355.6" width="1.6" height="6" fill="#e7e7ff"/>
<rect x="476.2" y="361.4" width="10" height="1.2" fill="#00008c"/>
<rect x="484.6" y="355.6" width="1.6" height="7" fill="#00008c"/>
<rect x="476.2" y="360.4" width="8.5" height="1.2" fill="#e7e7ff"/>
<rect x="483.1" y="355.6" width="1.6" height="6" fill="#e7e7ff"/>
<path d="M260 298.600v21l5-4.800l5.200 11.400l3-1.300l-5-11.300h7z" fill="#fff"/>
<rect x="3" y="555" width="14" height="1" fill="#848284"/>
<rect x="3" y="555" width="1" height="17" fill="#848284"/>
<rect x="3" y="571" width="14" height="1" fill="#ffffff"/>
<rect x="16" y="555" width="1" height="17" fill="#ffffff"/>
<rect x="19" y="555" width="14" height="1" fill="#848284"/>
<rect x="19" y="555" width="1" height="17" fill="#848284"/>
<rect x="19" y="571" width="14" height="1" fill="#ffffff"/>
<rect x="32" y="555" width="1" height="17" fill="#ffffff"/>
<rect x="35" y="555" width="164" height="1" fill="#848284"/>
<rect x="35" y="555" width="1" height="17" fill="#848284"/>
<rect x="35" y="571" width="164" height="1" fill="#ffffff"/>
<rect x="198" y="555" width="1" height="17" fill="#ffffff"/>
<rect x="203" y="555" width="16" height="1" fill="#848284"/>
<rect x="203" y="555" width="1" height="17" fill="#848284"/>
<rect x="203" y="571" width="16" height="1" fill="#ffffff"/>
<rect x="218" y="555" width="1" height="17" fill="#ffffff"/>
<rect x="221" y="555" width="14" height="1" fill="#848284"/>
<rect x="221" y="555" width="1" height="17" fill="#848284"/>
<rect x="221" y="571" width="14" height="1" fill="#ffffff"/>
<rect x="234" y="555" width="1" height="17" fill="#ffffff"/>
<rect x="237" y="555" width="161" height="1" fill="#848284"/>
<rect x="237" y="555" width="1" height="17" fill="#848284"/>
<rect x="237" y="571" width="161" height="1" fill="#ffffff"/>
<rect x="397" y="555" width="1" height="17" fill="#ffffff"/>
<rect x="401" y="555" width="67" height="1" fill="#848284"/>
<rect x="401" y="555" width="1" height="17" fill="#848284"/>
<rect x="401" y="571" width="67" height="1" fill="#ffffff"/>
<rect x="467" y="555" width="1" height="17" fill="#ffffff"/>
<rect x="471" y="555" width="117" height="1" fill="#848284"/>
<rect x="471" y="555" width="1" height="17" fill="#848284"/>
<rect x="471" y="571" width="117" height="1" fill="#ffffff"/>
<rect x="587" y="555" width="1" height="17" fill="#ffffff"/>
<circle cx="10.100" cy="563.800" r="3.700" fill="#000"/><rect x="22" y="562" width="8.400" height="4" fill="#000"/>
<circle cx="211.900" cy="563.800" r="3.700" fill="#000"/><rect x="224" y="561.800" width="8.400" height="4" fill="#000"/>
<rect x="404" y="559.4" width="3.7" height="10" fill="#000"/>
<rect x="474" y="559.4" width="3.6" height="10" fill="#000"/>
<text class="ls" x="413.8" y="567.8" font-size="12" fill="#000" textLength="50" lengthAdjust="spacingAndGlyphs">HD BUSY</text>
<clipPath id="sc"><rect x="472" y="556" width="115" height="15"/></clipPath>
<text class="ls" x="484" y="567.8" font-size="12" fill="#000" textLength="109.5" lengthAdjust="spacingAndGlyphs" clip-path="url(#sc)">External SCSI Device</text>
</svg>
</body></html>
